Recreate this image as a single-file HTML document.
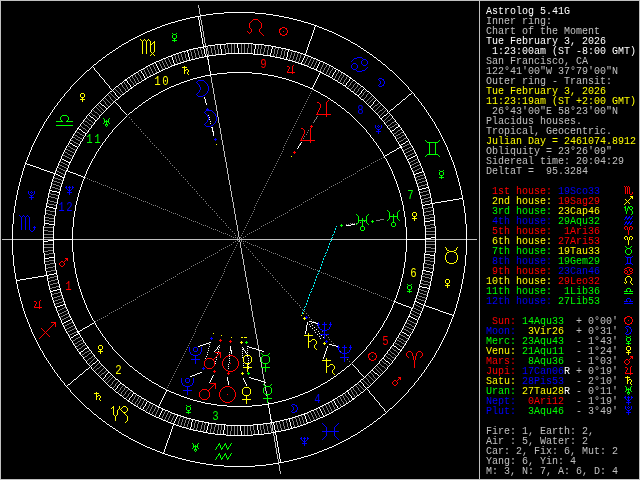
<!DOCTYPE html>
<html><head><meta charset="utf-8"><title>Astrolog 5.41G</title>
<style>
html,body{margin:0;padding:0;background:#000;overflow:hidden}
svg{display:block;will-change:transform}
text{font-family:"Liberation Mono",monospace;font-size:10px;white-space:pre}
text.h{font-size:13.33px;letter-spacing:2px}
.c line,.c circle,.c path{shape-rendering:crispEdges;stroke-width:1;stroke-linecap:square}
.p path{shape-rendering:crispEdges;stroke-width:1;fill:none}
</style></head><body>
<svg width="640" height="480" viewBox="0 0 640 480">
<rect width="640" height="480" fill="#000"/>
<g class="c">
<path d="M0.5 480V0.5H640M639.5 0V479.5H0M479.5 0V480" stroke="#c0c0c0" fill="none" stroke-linecap="butt"/>
</g>
<g class="p" transform="translate(0,0.5)">
<path stroke="#c0c0c0" d="M198 5h1M198 6h1M198 7h1M199 8h1M199 9h1M199 10h1M199 11h1M199 12h1M199 13h1M200 14h1M200 16h1M200 17h1M200 18h1M200 19h1M201 20h1M201 21h1M201 22h1M201 23h1M201 24h1M202 25h1M202 26h1M202 27h1M202 28h1M202 29h1M202 30h1M203 31h1M203 32h1M203 33h1M203 34h1M203 35h1M203 36h1M204 37h1M204 38h1M204 39h1M204 40h1M204 41h1M204 42h1M205 43h1M205 44h1M205 45h1M205 47h1M206 48h1M206 49h1M206 50h1M206 51h1M206 52h1M206 53h1M207 54h1M207 59h1M210 76h1M211 77h1M211 78h1M211 79h1M211 80h1M211 81h1M211 82h1M212 83h1M212 84h1M212 85h1M212 86h1M212 87h1M213 88h1M213 89h1M213 90h1M213 91h1M213 92h1M213 93h1M214 94h1M214 95h1M214 96h1M214 97h1M214 98h1M214 99h1M215 100h1M215 101h1M215 102h1M215 103h1M215 104h1M216 105h1M216 106h1M216 107h1M216 108h1M216 109h1M216 110h1M217 111h1M217 112h1M217 113h1M217 114h1M217 115h1M217 116h1M218 117h1M218 118h1M218 119h1M218 120h1M218 121h1M218 122h1M219 123h1M219 124h1M219 125h1M219 126h1M219 127h1M220 128h1M220 129h1M220 130h1M220 131h1M220 132h1M220 133h1M221 134h1M221 135h1M221 136h1M221 137h1M221 138h1M221 139h1M222 140h1M222 141h1M222 142h1M222 143h1M222 144h1M223 145h1M223 146h1M223 147h1M223 148h1M223 149h1M223 150h1M224 151h1M224 152h1M224 153h1M224 154h1M224 155h1M224 156h1M225 157h1M225 158h1M225 159h1M225 160h1M225 161h1M226 162h1M226 163h1M226 164h1M226 165h1M226 166h1M226 167h1M227 168h1M227 169h1M227 170h1M227 171h1M227 172h1M227 173h1M228 174h1M228 175h1M228 176h1M228 177h1M228 178h1M228 179h1M229 180h1M229 181h1M229 182h1M229 183h1M229 184h1M230 185h1M230 186h1M230 187h1M230 188h1M230 189h1M230 190h1M231 191h1M231 192h1M231 193h1M231 194h1M231 195h1M231 196h1M232 197h1M232 198h1M232 199h1M232 200h1M232 201h1M233 202h1M233 203h1M233 204h1M233 205h1M233 206h1M233 207h1M234 208h1M234 209h1M234 210h1M234 211h1M234 212h1M234 213h1M235 214h1M235 215h1M235 216h1M235 217h1M235 218h1M235 219h1M236 220h1M236 221h1M236 222h1M236 223h1M236 224h1M237 225h1M237 226h1M237 227h1M237 228h1M237 229h1M237 230h1M238 231h1M238 232h1M238 233h1M238 234h1M238 235h1M238 236h1M239 237h1M239 238h1M2 239h10M13 239h30M44 239h9M73 239h166M240 239h166M426 239h9M436 239h30M467 239h10M239 240h1M239 241h1M240 242h1M240 243h1M240 244h1M240 245h1M240 246h1M240 247h1M241 248h1M241 249h1M241 250h1M241 251h1M241 252h1M241 253h1M242 254h1M242 255h1M242 256h1M242 257h1M242 258h1M243 259h1M243 260h1M243 261h1M243 262h1M243 263h1M243 264h1M244 265h1M244 266h1M244 267h1M244 268h1M244 269h1M244 270h1M245 271h1M245 272h1M245 273h1M245 274h1M245 275h1M245 276h1M246 277h1M246 278h1M246 279h1M246 280h1M246 281h1M247 282h1M247 283h1M247 284h1M247 285h1M247 286h1M247 287h1M248 288h1M248 289h1M248 290h1M248 291h1M248 292h1M248 293h1M249 294h1M249 295h1M249 296h1M249 297h1M249 298h1M250 299h1M250 300h1M250 301h1M250 302h1M250 303h1M250 304h1M251 305h1M251 306h1M251 307h1M251 308h1M251 309h1M251 310h1M252 311h1M252 312h1M252 313h1M252 314h1M252 315h1M252 316h1M253 317h1M253 318h1M253 319h1M253 320h1M253 321h1M254 322h1M254 323h1M254 324h1M254 325h1M254 326h1M254 327h1M255 328h1M255 329h1M255 330h1M255 331h1M255 332h1M255 333h1M256 334h1M256 335h1M256 336h1M256 337h1M256 338h1M257 339h1M257 340h1M257 341h1M257 342h1M257 343h1M257 344h1M258 345h1M258 346h1M258 347h1M258 348h1M258 350h1M259 351h1M259 352h1M259 353h1M259 354h1M259 355h1M259 356h1M260 357h1M260 358h1M260 359h1M260 360h1M260 361h1M261 362h1M261 363h1M261 364h1M261 365h1M261 366h1M262 368h1M262 369h1M262 370h1M262 371h1M262 372h1M262 373h1M263 374h1M263 375h1M263 376h1M263 377h1M263 378h1M264 379h1M264 380h1M264 381h1M264 383h1M264 384h1M265 385h1M265 387h1M265 388h1M265 389h1M265 390h1M266 391h1M266 392h1M266 393h1M266 395h1M268 402h1M271 419h1M271 424h1M272 425h1M272 426h1M272 427h1M272 428h1M272 429h1M272 430h1M273 431h1M273 433h1M273 434h1M273 435h1M274 436h1M274 437h1M274 438h1M274 439h1M274 440h1M274 441h1M275 442h1M275 443h1M275 444h1M275 445h1M275 446h1M275 447h1M276 448h1M276 449h1M276 450h1M276 451h1M276 452h1M276 453h1M277 454h1M277 455h1M277 456h1M277 457h1M277 458h1M278 459h1M278 460h1M278 461h1M278 462h1M278 464h1M279 465h1M279 466h1M279 467h1M279 468h1M279 469h1M279 470h1M280 471h1M280 472h1M280 473h1"/>
<path stroke="#ffffff" d="M224 12h31M213 13h11M255 13h11M206 14h7M266 14h7M200 15h6M273 15h6M195 16h5M279 16h5M190 17h5M198 17h1M284 17h5M186 18h4M198 18h1M289 18h4M182 19h4M198 19h1M293 19h4M178 20h4M199 20h1M297 20h4M175 21h3M199 21h1M301 21h3M171 22h4M199 22h1M304 22h4M168 23h3M199 23h1M308 23h3M165 24h3M199 24h1M311 24h3M162 25h3M199 25h1M314 25h3M160 26h2M200 26h1M315 26h1M317 26h2M157 27h3M200 27h1M314 27h1M319 27h3M155 28h2M200 28h1M314 28h1M322 28h2M152 29h3M200 29h1M314 29h1M324 29h3M150 30h2M200 30h1M313 30h1M327 30h2M147 31h3M200 31h1M313 31h1M329 31h3M145 32h2M201 32h1M313 32h1M332 32h2M143 33h2M201 33h1M312 33h1M334 33h2M141 34h2M201 34h1M312 34h1M336 34h2M139 35h2M201 35h1M312 35h1M338 35h2M137 36h2M201 36h1M311 36h1M340 36h2M135 37h2M201 37h1M311 37h1M342 37h2M133 38h2M202 38h1M311 38h1M344 38h2M131 39h2M202 39h1M310 39h1M346 39h2M129 40h2M202 40h1M310 40h1M348 40h2M128 41h1M202 41h1M309 41h1M350 41h1M126 42h2M202 42h1M309 42h1M351 42h2M124 43h2M202 43h1M226 43h27M309 43h1M353 43h2M122 44h2M203 44h1M215 44h11M237 44h1M253 44h11M308 44h1M355 44h2M121 45h1M203 45h1M208 45h7M220 45h1M237 45h1M255 45h1M264 45h7M308 45h1M357 45h1M119 46h2M203 46h5M220 46h1M237 46h1M255 46h1M271 46h5M308 46h1M358 46h2M118 47h1M198 47h6M220 47h1M237 47h1M255 47h1M272 47h1M276 47h5M307 47h1M360 47h1M116 48h2M193 48h5M203 48h1M220 48h1M238 48h1M255 48h1M272 48h1M281 48h5M307 48h1M361 48h2M115 49h1M189 49h4M204 49h1M221 49h1M238 49h1M254 49h1M271 49h1M286 49h4M307 49h1M363 49h1M113 50h2M186 50h3M204 50h1M221 50h1M238 50h1M254 50h1M271 50h1M288 50h1M290 50h3M306 50h1M364 50h2M112 51h1M182 51h4M187 51h1M204 51h1M221 51h1M238 51h1M254 51h1M271 51h1M288 51h1M293 51h4M306 51h1M366 51h1M110 52h2M179 52h3M187 52h1M204 52h1M221 52h1M238 52h1M254 52h1M271 52h1M287 52h1M297 52h3M306 52h1M367 52h2M109 53h1M176 53h3M188 53h1M204 53h1M221 53h1M226 53h27M254 53h1M270 53h1M287 53h1M300 53h3M305 53h1M369 53h1M107 54h2M173 54h3M188 54h1M205 54h1M216 54h10M253 54h10M270 54h1M287 54h1M303 54h3M370 54h2M106 55h1M171 55h2M188 55h1M205 55h1M207 55h1M209 55h7M263 55h8M287 55h1M305 55h3M372 55h1M105 56h1M168 56h4M188 56h1M204 56h5M270 56h5M287 56h1M304 56h1M308 56h3M373 56h1M103 57h2M166 57h2M172 57h1M189 57h1M199 57h5M207 57h1M275 57h5M286 57h1M304 57h1M311 57h2M374 57h2M102 58h1M163 58h3M172 58h1M189 58h1M195 58h4M207 58h1M280 58h4M286 58h1M303 58h1M313 58h3M376 58h1M101 59h1M161 59h2M172 59h1M189 59h1M191 59h4M208 59h1M284 59h4M303 59h1M316 59h2M377 59h1M99 60h2M159 60h2M173 60h1M187 60h4M208 60h1M288 60h4M302 60h1M318 60h2M378 60h2M98 61h1M156 61h3M173 61h1M184 61h3M208 61h1M292 61h3M302 61h1M320 61h3M380 61h1M97 62h1M154 62h2M173 62h1M181 62h3M208 62h1M295 62h3M301 62h1M319 62h1M323 62h2M381 62h1M96 63h1M152 63h2M155 63h1M174 63h1M178 63h3M208 63h1M298 63h4M319 63h1M325 63h2M382 63h1M94 64h2M150 64h2M156 64h1M174 64h4M208 64h1M301 64h3M318 64h1M327 64h2M383 64h2M93 65h1M148 65h2M156 65h1M172 65h3M209 65h1M304 65h3M318 65h1M329 65h2M385 65h1M92 66h1M146 66h2M157 66h1M170 66h2M209 66h1M307 66h2M317 66h1M331 66h2M386 66h1M91 67h1M93 67h1M145 67h1M157 67h1M168 67h2M209 67h1M309 67h2M317 67h1M333 67h1M387 67h1M90 68h1M94 68h1M143 68h2M158 68h1M165 68h3M209 68h1M311 68h3M316 68h1M334 68h2M388 68h1M89 69h1M94 69h1M141 69h2M158 69h1M163 69h2M209 69h1M314 69h3M336 69h2M389 69h1M87 70h2M95 70h1M139 70h2M159 70h1M161 70h2M209 70h1M316 70h2M335 70h1M338 70h2M390 70h2M86 71h1M96 71h1M138 71h1M141 71h1M159 71h2M210 71h1M318 71h3M335 71h1M340 71h1M392 71h1M85 72h1M97 72h1M136 72h2M141 72h1M157 72h2M210 72h1M227 72h25M320 72h2M334 72h1M341 72h2M393 72h1M84 73h1M98 73h1M134 73h2M142 73h1M155 73h2M210 73h1M217 73h10M252 73h10M319 73h1M322 73h2M333 73h1M343 73h2M394 73h1M83 74h1M99 74h1M133 74h1M143 74h1M153 74h2M210 74h7M262 74h6M319 74h1M324 74h2M333 74h1M345 74h1M395 74h1M82 75h1M99 75h1M131 75h2M143 75h1M151 75h2M205 75h6M268 75h6M318 75h1M326 75h2M332 75h1M346 75h2M396 75h1M81 76h1M100 76h1M130 76h1M144 76h1M149 76h2M201 76h4M274 76h4M318 76h1M328 76h2M332 76h1M348 76h1M397 76h1M80 77h1M101 77h1M128 77h2M144 77h1M147 77h2M197 77h4M278 77h4M317 77h1M330 77h2M349 77h2M398 77h1M79 78h1M102 78h1M127 78h1M145 78h2M193 78h4M282 78h4M317 78h1M332 78h1M350 78h2M399 78h1M78 79h1M103 79h1M125 79h2M144 79h2M190 79h3M286 79h3M316 79h1M333 79h2M349 79h1M352 79h1M400 79h1M77 80h1M104 80h1M124 80h3M142 80h2M187 80h3M289 80h3M316 80h1M335 80h2M349 80h1M353 80h2M401 80h1M76 81h1M104 81h1M123 81h1M127 81h1M141 81h1M184 81h3M292 81h3M315 81h1M337 81h1M348 81h1M355 81h1M402 81h1M75 82h1M105 82h1M122 82h1M127 82h1M139 82h2M181 82h3M295 82h3M315 82h1M338 82h2M347 82h1M356 82h1M403 82h1M74 83h1M106 83h1M120 83h2M128 83h1M137 83h2M179 83h2M298 83h2M314 83h1M340 83h2M346 83h1M357 83h2M404 83h1M73 84h1M107 84h1M119 84h1M129 84h1M136 84h1M176 84h3M300 84h3M314 84h1M342 84h1M346 84h1M359 84h1M405 84h1M72 85h1M108 85h1M118 85h1M130 85h1M134 85h2M174 85h2M303 85h2M313 85h1M343 85h3M360 85h1M406 85h1M71 86h1M109 86h1M116 86h2M130 86h1M133 86h1M171 86h3M305 86h3M313 86h1M345 86h1M361 86h2M407 86h1M70 87h1M109 87h1M115 87h1M131 87h2M169 87h2M308 87h2M312 87h1M346 87h1M363 87h1M408 87h1M70 88h1M110 88h1M114 88h1M130 88h2M167 88h2M310 88h3M347 88h2M364 88h1M408 88h1M69 89h1M111 89h1M113 89h1M129 89h1M165 89h2M313 89h1M349 89h1M363 89h1M365 89h1M409 89h1M68 90h1M112 90h1M128 90h1M163 90h2M314 90h2M350 90h1M362 90h1M366 90h1M410 90h1M67 91h1M110 91h2M113 91h1M126 91h2M161 91h2M316 91h2M351 91h2M361 91h1M367 91h2M411 91h1M66 92h1M109 92h1M114 92h1M125 92h1M159 92h2M318 92h2M353 92h1M361 92h1M369 92h1M412 92h1M65 93h1M108 93h1M115 93h1M124 93h1M158 93h1M320 93h1M354 93h1M360 93h1M370 93h1M411 93h1M413 93h1M64 94h1M107 94h1M115 94h1M122 94h2M156 94h2M321 94h2M355 94h2M359 94h1M371 94h1M409 94h2M414 94h1M64 95h1M106 95h1M116 95h1M121 95h1M154 95h2M323 95h2M357 95h2M372 95h1M408 95h1M414 95h1M63 96h1M105 96h1M117 96h1M120 96h1M152 96h2M325 96h2M358 96h1M373 96h1M407 96h1M415 96h1M62 97h1M104 97h1M118 97h2M151 97h1M204 97h1M327 97h1M359 97h1M374 97h1M406 97h1M416 97h1M61 98h1M103 98h1M118 98h1M149 98h2M204 98h1M328 98h2M360 98h1M375 98h1M405 98h1M417 98h1M60 99h1M102 99h1M116 99h2M148 99h1M205 99h1M330 99h1M361 99h2M376 99h1M403 99h2M418 99h1M60 100h1M101 100h1M115 100h1M146 100h2M205 100h1M331 100h2M363 100h1M375 100h1M377 100h1M402 100h1M418 100h1M59 101h1M100 101h1M114 101h1M145 101h1M205 101h1M333 101h1M364 101h1M374 101h1M378 101h1M401 101h1M419 101h1M58 102h1M99 102h1M113 102h1M115 102h1M143 102h2M205 102h1M334 102h2M365 102h1M373 102h1M379 102h1M400 102h1M420 102h1M57 103h1M98 103h1M100 103h1M112 103h1M116 103h1M142 103h1M206 103h1M336 103h1M366 103h1M373 103h1M380 103h1M399 103h1M421 103h1M57 104h1M97 104h1M101 104h1M111 104h1M117 104h1M141 104h1M206 104h1M337 104h1M367 104h1M372 104h1M381 104h1M397 104h2M421 104h1M56 105h1M96 105h1M102 105h2M110 105h1M118 105h1M139 105h2M338 105h2M368 105h1M371 105h1M382 105h1M396 105h1M422 105h1M55 106h1M95 106h1M104 106h1M109 106h1M119 106h1M138 106h1M340 106h1M369 106h2M383 106h1M395 106h1M423 106h1M54 107h1M94 107h1M105 107h1M108 107h1M120 107h1M137 107h1M341 107h1M370 107h1M384 107h1M394 107h1M424 107h1M54 108h1M93 108h1M106 108h2M120 108h1M135 108h2M342 108h2M371 108h1M385 108h1M393 108h1M424 108h1M53 109h1M92 109h1M106 109h1M121 109h1M134 109h1M344 109h1M372 109h1M386 109h1M391 109h2M425 109h1M52 110h1M91 110h1M105 110h1M122 110h1M133 110h1M345 110h1M373 110h1M387 110h1M390 110h1M426 110h1M52 111h1M91 111h1M104 111h1M123 111h1M132 111h1M346 111h1M374 111h1M387 111h1M389 111h1M426 111h1M51 112h1M90 112h1M103 112h1M124 112h1M130 112h2M347 112h2M375 112h1M388 112h1M427 112h1M50 113h1M89 113h1M102 113h1M125 113h1M129 113h1M349 113h1M376 113h1M387 113h1M389 113h1M428 113h1M50 114h1M88 114h1M101 114h1M126 114h1M128 114h1M350 114h1M377 114h1M386 114h1M390 114h1M428 114h1M49 115h1M87 115h1M89 115h1M100 115h1M208 115h1M351 115h1M378 115h1M384 115h2M391 115h1M429 115h1M48 116h1M86 116h1M90 116h1M99 116h1M126 116h1M352 116h1M379 116h1M383 116h1M392 116h1M430 116h1M48 117h1M86 117h1M91 117h2M99 117h1M125 117h1M209 117h1M353 117h1M379 117h1M382 117h1M392 117h1M430 117h1M47 118h1M85 118h1M93 118h1M98 118h1M124 118h1M354 118h1M380 118h2M393 118h1M431 118h1M46 119h1M84 119h1M94 119h1M97 119h1M123 119h1M209 119h1M355 119h1M381 119h1M394 119h1M432 119h1M46 120h1M83 120h1M95 120h2M122 120h1M356 120h1M382 120h1M395 120h1M432 120h1M45 121h1M83 121h1M95 121h1M121 121h1M210 121h1M357 121h1M383 121h1M395 121h1M433 121h1M44 122h1M82 122h1M94 122h1M120 122h1M358 122h1M384 122h1M396 122h1M434 122h1M44 123h1M81 123h1M94 123h1M119 123h1M210 123h1M359 123h1M384 123h1M397 123h1M434 123h1M43 124h1M80 124h1M93 124h1M118 124h1M360 124h1M385 124h1M398 124h1M435 124h1M43 125h1M80 125h1M92 125h1M117 125h1M361 125h1M386 125h1M398 125h2M435 125h1M42 126h1M79 126h1M91 126h1M116 126h1M362 126h1M387 126h1M398 126h2M436 126h1M42 127h1M78 127h1M91 127h1M115 127h1M211 127h2M363 127h1M387 127h1M396 127h2M400 127h1M436 127h1M41 128h1M77 128h2M90 128h1M114 128h1M212 128h1M364 128h1M388 128h1M395 128h1M401 128h1M437 128h1M40 129h1M77 129h1M79 129h2M89 129h1M113 129h1M212 129h1M365 129h1M389 129h1M394 129h1M401 129h1M438 129h1M40 130h1M76 130h1M81 130h1M88 130h1M112 130h1M212 130h1M366 130h1M390 130h1M392 130h2M402 130h1M438 130h1M39 131h1M75 131h1M82 131h1M88 131h1M112 131h1M212 131h2M366 131h1M390 131h2M403 131h1M439 131h1M39 132h1M75 132h1M83 132h2M87 132h1M111 132h1M213 132h1M367 132h1M391 132h1M403 132h1M439 132h1M38 133h1M74 133h1M85 133h2M110 133h1M213 133h1M368 133h1M392 133h1M404 133h1M440 133h1M38 134h1M73 134h1M85 134h1M109 134h1M213 134h1M369 134h1M393 134h1M405 134h1M440 134h1M37 135h1M73 135h1M85 135h1M108 135h1M213 135h1M370 135h1M393 135h1M405 135h1M441 135h1M37 136h1M72 136h1M84 136h1M108 136h1M370 136h1M394 136h1M406 136h1M441 136h1M36 137h1M72 137h1M83 137h1M107 137h1M371 137h1M395 137h1M406 137h1M442 137h1M36 138h1M71 138h1M83 138h1M106 138h1M372 138h1M395 138h1M407 138h1M442 138h1M35 139h1M70 139h1M82 139h1M105 139h1M373 139h1M396 139h1M408 139h1M443 139h1M35 140h1M70 140h1M82 140h1M105 140h1M373 140h1M396 140h1M408 140h1M443 140h1M34 141h1M69 141h1M81 141h1M104 141h1M374 141h1M397 141h1M406 141h2M409 141h1M444 141h1M34 142h1M69 142h1M80 142h1M103 142h1M301 142h1M375 142h1M398 142h1M405 142h1M409 142h1M444 142h1M33 143h1M68 143h1M70 143h2M80 143h1M102 143h1M300 143h1M376 143h1M398 143h1M403 143h2M410 143h1M445 143h1M33 144h1M68 144h1M72 144h1M79 144h1M102 144h1M300 144h1M376 144h1M399 144h1M401 144h2M410 144h1M445 144h1M32 145h1M67 145h1M73 145h2M79 145h1M101 145h1M299 145h1M377 145h1M399 145h2M411 145h1M446 145h1M32 146h1M66 146h1M75 146h2M78 146h1M100 146h1M298 146h1M378 146h1M400 146h2M412 146h1M446 146h1M31 147h1M66 147h1M77 147h1M100 147h1M298 147h1M378 147h1M399 147h3M412 147h1M447 147h1M31 148h1M65 148h1M77 148h1M99 148h1M297 148h1M379 148h1M397 148h2M401 148h1M413 148h1M447 148h1M31 149h1M65 149h1M76 149h1M98 149h1M380 149h1M396 149h1M402 149h1M413 149h1M447 149h1M30 150h1M64 150h1M76 150h1M98 150h1M380 150h1M394 150h2M402 150h1M414 150h1M448 150h1M30 151h1M64 151h1M75 151h1M97 151h1M381 151h1M392 151h2M403 151h1M414 151h1M448 151h1M29 152h1M63 152h1M75 152h1M96 152h1M382 152h1M390 152h2M403 152h1M415 152h1M449 152h1M29 153h1M63 153h1M74 153h1M96 153h1M382 153h1M389 153h1M404 153h1M415 153h1M449 153h1M29 154h1M62 154h1M74 154h1M95 154h1M383 154h1M387 154h2M404 154h1M416 154h1M449 154h1M28 155h1M62 155h1M73 155h1M95 155h1M383 155h1M385 155h2M405 155h1M415 155h2M450 155h1M28 156h1M61 156h1M73 156h1M94 156h1M384 156h1M405 156h1M413 156h2M417 156h1M450 156h1M27 157h1M61 157h1M72 157h1M94 157h1M384 157h1M406 157h1M411 157h2M417 157h1M451 157h1M27 158h1M61 158h1M72 158h1M93 158h1M385 158h1M406 158h1M409 158h2M417 158h1M451 158h1M27 159h1M60 159h1M62 159h2M71 159h1M92 159h1M386 159h1M407 159h2M418 159h1M451 159h1M26 160h1M60 160h1M64 160h2M71 160h1M92 160h1M386 160h1M407 160h1M418 160h1M452 160h1M26 161h1M59 161h1M66 161h2M70 161h1M91 161h1M387 161h1M408 161h1M419 161h1M452 161h1M25 162h1M59 162h1M68 162h3M91 162h1M387 162h1M408 162h1M419 162h1M453 162h1M25 163h2M58 163h1M69 163h1M90 163h1M388 163h1M409 163h1M420 163h1M453 163h1M25 164h1M27 164h3M58 164h1M69 164h1M90 164h1M388 164h1M409 164h1M420 164h1M453 164h1M24 165h1M30 165h3M58 165h1M68 165h1M89 165h1M389 165h1M410 165h1M420 165h1M454 165h1M24 166h1M33 166h3M57 166h1M68 166h1M89 166h1M389 166h1M410 166h1M421 166h1M454 166h1M24 167h1M36 167h3M57 167h1M68 167h1M88 167h1M390 167h1M410 167h1M421 167h1M454 167h1M23 168h1M39 168h2M56 168h1M67 168h1M88 168h1M390 168h1M411 168h1M422 168h1M455 168h1M23 169h1M41 169h3M56 169h1M67 169h1M87 169h1M391 169h1M411 169h1M422 169h1M455 169h1M23 170h1M44 170h3M56 170h1M66 170h2M87 170h1M391 170h1M412 170h1M422 170h1M455 170h1M22 171h1M47 171h3M55 171h1M66 171h1M68 171h2M86 171h1M392 171h1M412 171h1M422 171h2M456 171h1M22 172h1M50 172h3M55 172h1M65 172h1M70 172h3M86 172h1M392 172h1M413 172h1M419 172h3M423 172h1M456 172h1M22 173h1M53 173h3M65 173h1M73 173h3M86 173h1M392 173h1M413 173h1M416 173h3M424 173h1M456 173h1M22 174h1M54 174h1M56 174h2M65 174h1M76 174h2M85 174h1M393 174h1M413 174h3M424 174h1M456 174h1M21 175h1M54 175h1M58 175h2M64 175h1M78 175h3M85 175h1M393 175h1M414 175h1M424 175h1M457 175h1M21 176h1M53 176h1M60 176h2M64 176h1M81 176h2M84 176h1M394 176h1M414 176h1M425 176h1M457 176h1M21 177h1M53 177h1M62 177h3M83 177h2M394 177h1M414 177h1M425 177h1M457 177h1M20 178h1M53 178h1M63 178h1M84 178h1M394 178h1M415 178h1M425 178h1M458 178h1M20 179h1M52 179h1M63 179h1M83 179h1M395 179h1M415 179h1M426 179h1M458 179h1M20 180h1M52 180h1M63 180h1M83 180h1M395 180h1M415 180h1M426 180h1M458 180h1M20 181h1M52 181h1M62 181h1M82 181h1M396 181h1M416 181h1M426 181h1M458 181h1M19 182h1M51 182h1M62 182h1M82 182h1M396 182h1M416 182h1M427 182h1M459 182h1M19 183h1M51 183h1M62 183h1M82 183h1M396 183h1M416 183h1M427 183h1M459 183h1M19 184h1M51 184h1M61 184h1M81 184h1M397 184h1M417 184h1M427 184h1M459 184h1M19 185h1M51 185h1M61 185h1M81 185h1M397 185h1M417 185h1M427 185h1M459 185h1M18 186h1M50 186h1M61 186h1M81 186h1M397 186h1M417 186h1M428 186h1M460 186h1M18 187h1M50 187h1M60 187h1M80 187h1M398 187h1M418 187h1M426 187h3M460 187h1M18 188h1M50 188h1M60 188h1M80 188h1M398 188h1M418 188h1M422 188h4M428 188h1M460 188h1M18 189h1M49 189h1M60 189h1M80 189h1M398 189h1M418 189h4M429 189h1M460 189h1M17 190h1M49 190h3M60 190h1M79 190h1M399 190h1M418 190h1M429 190h1M461 190h1M17 191h1M49 191h1M52 191h5M59 191h1M79 191h1M399 191h1M419 191h1M429 191h1M461 191h1M17 192h1M49 192h1M57 192h3M79 192h1M399 192h1M419 192h1M429 192h1M461 192h1M17 193h1M48 193h1M59 193h1M78 193h1M400 193h1M419 193h1M430 193h1M461 193h1M17 194h1M48 194h1M59 194h1M78 194h1M400 194h1M419 194h1M430 194h1M461 194h1M16 195h1M48 195h1M58 195h1M78 195h1M400 195h1M420 195h1M430 195h1M462 195h1M16 196h1M48 196h1M58 196h1M78 196h1M400 196h1M420 196h1M430 196h1M462 196h1M16 197h1M48 197h1M58 197h1M77 197h1M401 197h1M420 197h1M430 197h1M462 197h1M16 198h1M47 198h1M58 198h1M77 198h1M401 198h1M420 198h1M431 198h1M459 198h4M16 199h1M47 199h1M57 199h1M77 199h1M401 199h1M421 199h1M431 199h1M453 199h6M462 199h1M15 200h1M47 200h1M57 200h1M77 200h1M401 200h1M421 200h1M431 200h1M447 200h6M463 200h1M15 201h1M47 201h1M57 201h1M76 201h1M402 201h1M421 201h1M431 201h1M441 201h6M463 201h1M15 202h1M47 202h1M57 202h1M76 202h1M402 202h1M421 202h1M431 202h1M435 202h6M463 202h1M15 203h1M46 203h1M57 203h1M76 203h1M402 203h1M421 203h1M430 203h5M463 203h1M15 204h1M46 204h1M56 204h1M76 204h1M402 204h1M422 204h1M425 204h5M432 204h1M463 204h1M15 205h1M46 205h1M56 205h1M75 205h1M403 205h1M422 205h3M432 205h1M463 205h1M14 206h1M46 206h3M56 206h1M75 206h1M403 206h1M422 206h1M432 206h1M464 206h1M14 207h1M46 207h1M49 207h4M56 207h1M75 207h1M403 207h1M422 207h1M432 207h1M464 207h1M14 208h1M45 208h1M53 208h4M75 208h1M403 208h1M422 208h1M433 208h1M464 208h1M14 209h1M45 209h1M55 209h1M75 209h1M403 209h1M423 209h1M433 209h1M464 209h1M14 210h1M45 210h1M55 210h1M75 210h1M403 210h1M423 210h1M433 210h1M464 210h1M14 211h1M45 211h1M55 211h1M74 211h1M404 211h1M423 211h1M433 211h1M464 211h1M14 212h1M45 212h1M55 212h1M74 212h1M404 212h1M423 212h1M433 212h1M464 212h1M13 213h1M45 213h1M55 213h1M74 213h1M404 213h1M423 213h1M433 213h1M465 213h1M13 214h1M45 214h1M55 214h1M74 214h1M404 214h1M423 214h1M433 214h1M465 214h1M13 215h1M44 215h1M55 215h1M74 215h1M404 215h1M423 215h1M434 215h1M465 215h1M13 216h1M44 216h1M54 216h1M74 216h1M404 216h1M424 216h1M434 216h1M465 216h1M13 217h1M44 217h1M54 217h1M73 217h1M405 217h1M424 217h1M434 217h1M465 217h1M13 218h1M44 218h1M54 218h1M73 218h1M405 218h1M424 218h1M434 218h1M465 218h1M13 219h1M44 219h1M54 219h1M73 219h1M405 219h1M424 219h1M434 219h1M465 219h1M13 220h1M44 220h1M54 220h1M73 220h1M405 220h1M424 220h1M430 220h5M465 220h1M13 221h1M44 221h1M54 221h1M73 221h1M405 221h1M424 221h6M434 221h1M465 221h1M13 222h1M44 222h1M54 222h1M73 222h1M405 222h1M424 222h1M434 222h1M465 222h1M13 223h1M44 223h5M54 223h1M73 223h1M405 223h1M424 223h1M434 223h1M465 223h1M12 224h1M44 224h1M49 224h6M73 224h1M351 224h4M405 224h1M424 224h1M434 224h1M466 224h1M12 225h1M44 225h1M54 225h1M73 225h1M346 225h5M405 225h1M424 225h1M434 225h1M466 225h1M12 226h1M43 226h1M53 226h1M73 226h1M405 226h1M425 226h1M435 226h1M466 226h1M12 227h1M43 227h1M53 227h1M72 227h1M406 227h1M425 227h1M435 227h1M466 227h1M12 228h1M43 228h1M53 228h1M72 228h1M406 228h1M425 228h1M435 228h1M466 228h1M12 229h1M43 229h1M53 229h1M72 229h1M406 229h1M425 229h1M435 229h1M466 229h1M12 230h1M43 230h1M53 230h1M72 230h1M406 230h1M425 230h1M435 230h1M466 230h1M12 231h1M43 231h1M53 231h1M72 231h1M406 231h1M425 231h1M435 231h1M466 231h1M12 232h1M43 232h1M53 232h1M72 232h1M406 232h1M425 232h1M435 232h1M466 232h1M12 233h1M43 233h1M53 233h1M72 233h1M406 233h1M425 233h1M435 233h1M466 233h1M12 234h1M43 234h1M53 234h1M72 234h1M406 234h1M425 234h1M435 234h1M466 234h1M12 235h1M43 235h1M53 235h1M72 235h1M406 235h1M425 235h1M435 235h1M466 235h1M12 236h1M43 236h1M53 236h1M72 236h1M406 236h1M425 236h1M435 236h1M466 236h1M12 237h1M43 237h1M53 237h1M72 237h1M406 237h1M425 237h1M431 237h5M466 237h1M12 238h1M43 238h1M53 238h1M72 238h1M406 238h1M425 238h6M435 238h1M466 238h1M12 239h1M43 239h1M53 239h20M406 239h20M435 239h1M466 239h1M12 240h1M43 240h1M48 240h6M72 240h1M406 240h1M425 240h1M435 240h1M466 240h1M12 241h1M43 241h5M53 241h1M72 241h1M406 241h1M425 241h1M435 241h1M466 241h1M12 242h1M43 242h1M53 242h1M72 242h1M406 242h1M425 242h1M435 242h1M466 242h1M12 243h1M43 243h1M53 243h1M72 243h1M406 243h1M425 243h1M435 243h1M466 243h1M12 244h1M43 244h1M53 244h1M72 244h1M406 244h1M425 244h1M435 244h1M466 244h1M12 245h1M43 245h1M53 245h1M72 245h1M406 245h1M425 245h1M435 245h1M466 245h1M12 246h1M43 246h1M53 246h1M72 246h1M406 246h1M425 246h1M435 246h1M466 246h1M12 247h1M43 247h1M53 247h1M72 247h1M406 247h1M425 247h1M435 247h1M466 247h1M12 248h1M43 248h1M53 248h1M72 248h1M406 248h1M425 248h1M435 248h1M466 248h1M12 249h1M43 249h1M53 249h1M72 249h1M406 249h1M425 249h1M435 249h1M466 249h1M12 250h1M43 250h1M53 250h1M72 250h1M406 250h1M425 250h1M435 250h1M466 250h1M12 251h1M43 251h1M53 251h1M72 251h1M406 251h1M425 251h1M435 251h1M466 251h1M12 252h1M43 252h1M53 252h1M73 252h1M405 252h1M425 252h1M435 252h1M466 252h1M12 253h1M44 253h1M54 253h1M73 253h1M405 253h1M424 253h1M434 253h1M466 253h1M12 254h1M44 254h1M54 254h1M73 254h1M405 254h1M424 254h6M434 254h1M466 254h1M13 255h1M44 255h1M54 255h1M73 255h1M405 255h1M424 255h1M430 255h5M465 255h1M13 256h1M44 256h1M54 256h1M73 256h1M405 256h1M424 256h1M434 256h1M465 256h1M13 257h1M44 257h1M49 257h6M73 257h1M405 257h1M424 257h1M434 257h1M465 257h1M13 258h1M44 258h5M54 258h1M73 258h1M405 258h1M424 258h1M434 258h1M465 258h1M13 259h1M44 259h1M54 259h1M73 259h1M405 259h1M424 259h1M434 259h1M465 259h1M13 260h1M44 260h1M54 260h1M73 260h1M405 260h1M424 260h1M434 260h1M465 260h1M13 261h1M44 261h1M54 261h1M73 261h1M405 261h1M424 261h1M434 261h1M465 261h1M13 262h1M44 262h1M54 262h1M74 262h1M404 262h1M424 262h1M434 262h1M465 262h1M13 263h1M44 263h1M55 263h1M74 263h1M404 263h1M423 263h1M434 263h1M465 263h1M13 264h1M45 264h1M55 264h1M74 264h1M404 264h1M423 264h1M433 264h1M465 264h1M13 265h1M45 265h1M55 265h1M74 265h1M404 265h1M423 265h1M433 265h1M465 265h1M14 266h1M45 266h1M55 266h1M74 266h1M404 266h1M423 266h1M433 266h1M464 266h1M14 267h1M45 267h1M55 267h1M74 267h1M404 267h1M423 267h1M433 267h1M464 267h1M14 268h1M45 268h1M55 268h1M75 268h1M403 268h1M423 268h1M433 268h1M464 268h1M14 269h1M45 269h1M55 269h1M75 269h1M403 269h1M423 269h1M433 269h1M464 269h1M14 270h1M45 270h1M56 270h1M75 270h1M403 270h1M422 270h4M433 270h1M464 270h1M14 271h1M46 271h1M56 271h1M75 271h1M403 271h1M422 271h1M426 271h4M432 271h1M464 271h1M14 272h1M46 272h1M56 272h1M75 272h1M403 272h1M422 272h1M430 272h3M464 272h1M15 273h1M46 273h1M54 273h3M75 273h1M403 273h1M422 273h1M432 273h1M463 273h1M15 274h1M46 274h1M49 274h5M56 274h1M76 274h1M402 274h1M422 274h1M432 274h1M463 274h1M15 275h1M44 275h5M57 275h1M76 275h1M402 275h1M421 275h1M432 275h1M463 275h1M15 276h1M38 276h6M47 276h1M57 276h1M76 276h1M402 276h1M421 276h1M431 276h1M463 276h1M15 277h1M32 277h6M47 277h1M57 277h1M76 277h1M402 277h1M421 277h1M431 277h1M463 277h1M15 278h1M26 278h6M47 278h1M57 278h1M77 278h1M401 278h1M421 278h1M431 278h1M463 278h1M16 279h1M20 279h6M47 279h1M57 279h1M77 279h1M401 279h1M421 279h1M431 279h1M462 279h1M16 280h4M47 280h1M58 280h1M77 280h1M401 280h1M420 280h1M431 280h1M462 280h1M16 281h1M48 281h1M58 281h1M77 281h1M401 281h1M420 281h1M430 281h1M462 281h1M16 282h1M48 282h1M58 282h1M78 282h1M400 282h1M420 282h1M430 282h1M462 282h1M16 283h1M48 283h1M58 283h1M78 283h1M400 283h1M420 283h1M430 283h1M462 283h1M17 284h1M48 284h1M59 284h1M78 284h1M400 284h1M419 284h1M430 284h1M461 284h1M17 285h1M48 285h1M59 285h1M78 285h1M400 285h1M419 285h1M430 285h1M461 285h1M17 286h1M49 286h1M59 286h1M79 286h1M399 286h1M419 286h3M429 286h1M461 286h1M17 287h1M49 287h1M59 287h1M79 287h1M399 287h1M419 287h1M422 287h5M429 287h1M461 287h1M17 288h1M49 288h1M60 288h1M79 288h1M399 288h1M418 288h1M427 288h3M461 288h1M18 289h1M49 289h1M57 289h4M80 289h1M398 289h1M418 289h1M429 289h1M460 289h1M18 290h1M50 290h1M53 290h4M60 290h1M80 290h1M398 290h1M418 290h1M428 290h1M460 290h1M18 291h1M50 291h3M60 291h1M80 291h1M398 291h1M418 291h1M428 291h1M460 291h1M18 292h1M50 292h1M61 292h1M81 292h1M397 292h1M417 292h1M428 292h1M460 292h1M19 293h1M51 293h1M61 293h1M81 293h1M397 293h1M417 293h1M427 293h1M459 293h1M19 294h1M51 294h1M61 294h1M81 294h1M397 294h1M417 294h1M427 294h1M459 294h1M19 295h1M51 295h1M62 295h1M82 295h1M396 295h1M416 295h1M427 295h1M459 295h1M19 296h1M51 296h1M62 296h1M82 296h1M396 296h1M416 296h1M427 296h1M459 296h1M20 297h1M52 297h1M62 297h1M82 297h1M396 297h1M416 297h1M426 297h1M458 297h1M20 298h1M52 298h1M63 298h1M83 298h1M395 298h1M415 298h1M426 298h1M458 298h1M20 299h1M52 299h1M63 299h1M83 299h1M395 299h1M415 299h1M426 299h1M458 299h1M20 300h1M53 300h1M63 300h1M84 300h1M394 300h1M415 300h1M425 300h1M458 300h1M21 301h1M53 301h1M64 301h1M84 301h1M394 301h2M414 301h3M425 301h1M457 301h1M21 302h1M53 302h1M64 302h1M84 302h1M394 302h1M396 302h2M414 302h1M417 302h2M425 302h1M457 302h1M21 303h1M54 303h1M64 303h1M85 303h1M393 303h1M398 303h3M414 303h1M419 303h2M424 303h1M457 303h1M22 304h1M54 304h1M63 304h3M85 304h1M393 304h1M401 304h2M413 304h1M421 304h2M424 304h1M456 304h1M22 305h1M54 305h1M60 305h3M65 305h1M86 305h1M392 305h1M403 305h3M413 305h1M423 305h3M456 305h1M22 306h1M55 306h1M57 306h3M65 306h1M86 306h1M392 306h1M406 306h3M413 306h1M423 306h1M426 306h3M456 306h1M22 307h1M55 307h2M66 307h1M86 307h1M392 307h1M409 307h2M412 307h1M423 307h1M429 307h3M456 307h1M23 308h1M56 308h1M66 308h1M87 308h1M391 308h1M411 308h2M422 308h1M432 308h3M455 308h1M23 309h1M56 309h1M67 309h1M87 309h1M391 309h1M411 309h1M422 309h1M435 309h3M455 309h1M23 310h1M56 310h1M67 310h1M88 310h1M390 310h1M411 310h1M422 310h1M438 310h2M455 310h1M24 311h1M57 311h1M68 311h1M88 311h1M390 311h1M410 311h1M421 311h1M440 311h3M454 311h1M24 312h1M57 312h1M68 312h1M89 312h1M389 312h1M410 312h1M421 312h1M443 312h3M454 312h1M24 313h1M58 313h1M68 313h1M89 313h1M389 313h1M410 313h1M420 313h1M446 313h3M454 313h1M25 314h1M58 314h1M69 314h1M90 314h1M388 314h1M409 314h1M420 314h1M449 314h3M453 314h1M25 315h1M58 315h1M69 315h1M90 315h1M388 315h1M409 315h1M420 315h1M452 315h2M25 316h1M59 316h1M70 316h1M91 316h1M387 316h1M408 316h3M419 316h1M453 316h1M26 317h1M59 317h1M70 317h1M91 317h1M387 317h1M408 317h1M411 317h2M419 317h1M452 317h1M26 318h1M60 318h1M71 318h1M92 318h1M386 318h1M407 318h1M413 318h2M418 318h1M452 318h1M27 319h1M60 319h1M70 319h2M92 319h1M386 319h1M407 319h1M415 319h2M418 319h1M451 319h1M27 320h1M61 320h1M68 320h2M72 320h1M93 320h1M385 320h1M406 320h1M417 320h1M451 320h1M27 321h1M61 321h1M66 321h2M72 321h1M94 321h1M309 321h3M384 321h1M406 321h1M417 321h1M451 321h1M28 322h1M61 322h1M64 322h2M73 322h1M94 322h1M307 322h1M312 322h4M384 322h1M405 322h1M417 322h1M450 322h1M28 323h1M62 323h2M73 323h1M92 323h2M95 323h1M307 323h1M311 323h1M316 323h2M383 323h1M405 323h1M416 323h1M450 323h1M29 324h1M62 324h1M74 324h1M90 324h2M95 324h1M307 324h1M309 324h1M383 324h1M404 324h1M416 324h1M449 324h1M29 325h1M63 325h1M74 325h1M89 325h1M96 325h1M306 325h1M312 325h1M382 325h1M404 325h1M415 325h1M449 325h1M29 326h1M63 326h1M75 326h1M87 326h2M96 326h1M306 326h1M310 326h1M382 326h1M403 326h1M415 326h1M449 326h1M30 327h1M64 327h1M75 327h1M85 327h2M97 327h1M306 327h1M314 327h1M381 327h1M403 327h1M414 327h1M448 327h1M30 328h1M64 328h1M76 328h1M83 328h2M98 328h1M306 328h1M312 328h1M380 328h1M402 328h1M414 328h1M448 328h1M31 329h1M65 329h1M76 329h1M82 329h1M98 329h1M306 329h1M316 329h1M380 329h1M402 329h1M413 329h1M447 329h1M31 330h1M65 330h1M77 330h1M80 330h2M99 330h1M306 330h1M314 330h1M379 330h1M401 330h1M413 330h1M447 330h1M31 331h1M66 331h1M77 331h3M100 331h1M305 331h1M318 331h1M378 331h1M401 331h1M412 331h1M447 331h1M32 332h1M66 332h1M77 332h2M100 332h1M305 332h1M315 332h1M378 332h1M400 332h1M402 332h2M412 332h1M446 332h1M32 333h1M67 333h1M78 333h2M101 333h1M305 333h1M319 333h1M377 333h1M399 333h1M404 333h2M411 333h1M446 333h1M33 334h1M68 334h1M76 334h2M79 334h1M102 334h1M317 334h1M376 334h1M399 334h1M406 334h1M410 334h1M445 334h1M33 335h1M68 335h1M74 335h2M80 335h1M102 335h1M321 335h1M376 335h1M398 335h1M407 335h2M410 335h1M445 335h1M34 336h1M69 336h1M73 336h1M80 336h1M103 336h1M319 336h1M375 336h1M398 336h1M409 336h1M444 336h1M34 337h1M69 337h1M71 337h2M81 337h1M104 337h1M323 337h1M374 337h1M397 337h1M409 337h1M444 337h1M35 338h1M70 338h1M82 338h1M105 338h1M320 338h1M373 338h1M396 338h1M408 338h1M443 338h1M35 339h1M70 339h1M82 339h1M105 339h1M373 339h1M396 339h1M408 339h1M443 339h1M36 340h1M71 340h1M83 340h1M106 340h1M372 340h1M395 340h1M407 340h1M442 340h1M36 341h1M72 341h1M83 341h1M107 341h1M371 341h1M395 341h1M406 341h1M442 341h1M37 342h1M72 342h1M84 342h1M108 342h1M209 342h2M370 342h1M394 342h1M406 342h1M441 342h1M37 343h1M73 343h1M85 343h1M108 343h1M206 343h3M370 343h1M393 343h1M405 343h1M441 343h1M38 344h1M73 344h1M85 344h1M109 344h1M203 344h3M209 344h1M329 344h3M369 344h1M393 344h1M405 344h1M440 344h1M38 345h1M74 345h1M86 345h1M110 345h1M200 345h3M219 345h1M332 345h4M368 345h1M392 345h2M404 345h1M440 345h1M39 346h1M75 346h1M87 346h1M111 346h1M198 346h2M209 346h1M218 346h1M230 346h1M247 346h2M327 346h1M336 346h2M367 346h1M391 346h1M394 346h2M403 346h1M439 346h1M39 347h1M75 347h1M87 347h2M112 347h1M217 347h1M219 347h1M230 347h1M242 347h1M249 347h3M327 347h1M366 347h1M390 347h1M396 347h1M403 347h1M439 347h1M40 348h1M76 348h1M85 348h2M88 348h1M112 348h1M208 348h1M217 348h1M230 348h1M243 348h1M247 348h1M252 348h4M326 348h1M366 348h1M390 348h1M397 348h1M402 348h1M438 348h1M40 349h1M77 349h1M84 349h1M89 349h1M113 349h1M216 349h1M218 349h1M230 349h1M242 349h2M256 349h3M326 349h1M365 349h1M389 349h1M398 349h2M401 349h1M438 349h1M41 350h1M77 350h1M83 350h1M90 350h1M114 350h1M208 350h1M215 350h1M230 350h2M244 350h1M247 350h1M259 350h3M326 350h1M364 350h1M388 350h1M400 350h2M437 350h1M42 351h1M78 351h1M81 351h2M91 351h1M115 351h1M214 351h1M218 351h1M231 351h1M242 351h1M245 351h1M262 351h2M325 351h1M363 351h1M387 351h1M400 351h1M436 351h1M42 352h1M79 352h2M91 352h1M116 352h1M207 352h1M229 352h1M231 352h1M245 352h1M247 352h1M325 352h1M362 352h1M387 352h1M399 352h1M436 352h1M43 353h1M79 353h2M92 353h1M117 353h1M217 353h1M231 353h1M242 353h1M246 353h1M325 353h1M361 353h1M386 353h1M398 353h1M435 353h1M43 354h1M80 354h1M93 354h1M118 354h1M207 354h1M229 354h1M247 354h1M324 354h1M360 354h1M385 354h1M398 354h1M435 354h1M44 355h1M81 355h1M94 355h1M119 355h1M242 355h1M324 355h1M359 355h1M384 355h1M397 355h1M434 355h1M44 356h1M82 356h1M94 356h1M120 356h1M206 356h1M229 356h1M247 356h1M324 356h1M358 356h1M384 356h1M396 356h1M434 356h1M45 357h1M83 357h1M95 357h1M121 357h1M216 357h1M242 357h1M323 357h1M357 357h1M383 357h1M395 357h1M433 357h1M46 358h1M83 358h1M96 358h1M122 358h1M205 358h1M229 358h1M248 358h1M323 358h1M356 358h1M382 358h2M395 358h1M432 358h1M46 359h1M84 359h1M97 359h1M123 359h1M216 359h1M355 359h1M381 359h1M384 359h1M394 359h1M432 359h1M47 360h1M85 360h1M97 360h2M124 360h1M229 360h1M248 360h1M354 360h1M380 360h1M385 360h1M393 360h1M431 360h1M48 361h1M86 361h1M96 361h1M99 361h1M125 361h1M215 361h1M353 361h1M379 361h1M386 361h2M392 361h1M430 361h1M48 362h1M86 362h1M95 362h1M99 362h1M126 362h1M229 362h1M248 362h1M352 362h1M379 362h1M388 362h1M392 362h1M430 362h1M49 363h1M87 363h1M93 363h2M100 363h1M127 363h1M215 363h1M243 363h1M378 363h1M389 363h1M391 363h1M429 363h1M50 364h1M88 364h1M92 364h1M101 364h1M128 364h1M228 364h1M248 364h1M350 364h1M352 364h1M377 364h1M390 364h1M428 364h1M50 365h1M89 365h1M91 365h1M102 365h1M129 365h1M243 365h1M349 365h1M353 365h1M376 365h1M389 365h1M428 365h1M51 366h1M90 366h1M103 366h1M130 366h2M228 366h1M248 366h1M347 366h2M354 366h1M375 366h1M388 366h1M427 366h1M52 367h1M89 367h1M91 367h1M104 367h1M132 367h1M346 367h1M355 367h1M374 367h1M387 367h1M426 367h1M52 368h1M88 368h1M91 368h1M105 368h1M133 368h1M228 368h1M248 368h1M345 368h1M356 368h1M373 368h1M387 368h1M426 368h1M53 369h1M86 369h2M92 369h1M106 369h1M134 369h1M344 369h1M357 369h1M372 369h1M386 369h1M425 369h1M54 370h1M85 370h1M93 370h1M107 370h1M135 370h2M342 370h2M358 370h1M371 370h2M385 370h1M424 370h1M54 371h1M84 371h1M94 371h1M108 371h1M137 371h1M341 371h1M358 371h1M370 371h1M373 371h1M384 371h1M424 371h1M55 372h1M83 372h1M95 372h1M108 372h2M138 372h1M200 372h2M340 372h1M359 372h1M369 372h1M374 372h1M383 372h1M423 372h1M56 373h1M82 373h1M96 373h1M107 373h1M110 373h1M139 373h2M197 373h3M338 373h2M360 373h1M368 373h1M375 373h2M382 373h1M422 373h1M57 374h1M80 374h2M97 374h1M106 374h1M111 374h1M141 374h1M195 374h2M337 374h1M361 374h1M367 374h1M377 374h1M381 374h1M421 374h1M57 375h1M79 375h1M98 375h1M105 375h1M112 375h1M142 375h1M192 375h3M213 375h1M336 375h1M362 375h1M366 375h1M378 375h1M380 375h1M421 375h1M58 376h1M78 376h1M99 376h1M105 376h1M113 376h1M143 376h2M190 376h2M212 376h1M334 376h2M363 376h1M365 376h1M379 376h1M420 376h1M59 377h1M77 377h1M100 377h1M104 377h1M114 377h1M145 377h1M212 377h1M227 377h1M249 377h2M333 377h1M364 377h1M378 377h1M419 377h1M60 378h1M76 378h1M101 378h1M103 378h1M115 378h1M146 378h2M211 378h1M227 378h1M243 378h1M251 378h3M331 378h2M363 378h1M377 378h1M418 378h1M60 379h1M74 379h2M102 379h1M116 379h2M148 379h1M211 379h1M227 379h1M243 379h1M254 379h4M330 379h1M361 379h2M376 379h1M418 379h1M61 380h1M73 380h1M103 380h1M118 380h1M149 380h2M210 380h1M227 380h1M244 380h1M258 380h3M328 380h2M360 380h1M375 380h1M417 380h1M62 381h1M72 381h1M104 381h1M119 381h1M151 381h1M210 381h1M228 381h1M244 381h1M261 381h3M327 381h1M359 381h2M374 381h1M416 381h1M63 382h1M71 382h1M105 382h1M120 382h1M152 382h2M209 382h1M228 382h1M245 382h1M264 382h2M325 382h2M358 382h1M361 382h1M373 382h1M415 382h1M64 383h1M70 383h1M106 383h1M120 383h2M154 383h2M228 383h1M245 383h1M323 383h2M357 383h1M362 383h1M372 383h1M414 383h1M64 384h1M68 384h2M107 384h1M119 384h1M122 384h2M156 384h2M228 384h1M246 384h1M321 384h2M355 384h2M363 384h1M371 384h1M414 384h1M65 385h1M67 385h1M108 385h1M118 385h1M124 385h1M158 385h1M246 385h1M320 385h1M354 385h1M363 385h1M370 385h1M413 385h1M66 386h1M109 386h1M117 386h1M125 386h1M159 386h2M318 386h2M353 386h1M364 386h1M369 386h1M412 386h1M67 387h1M110 387h2M117 387h1M126 387h2M161 387h2M316 387h2M351 387h2M365 387h1M367 387h2M411 387h1M68 388h1M112 388h1M116 388h1M128 388h1M163 388h2M314 388h2M350 388h1M366 388h1M410 388h1M69 389h1M113 389h1M115 389h1M129 389h1M165 389h1M312 389h2M349 389h1M365 389h1M367 389h1M409 389h1M70 390h1M114 390h1M130 390h2M166 390h3M310 390h2M347 390h2M364 390h1M368 390h1M408 390h1M70 391h1M115 391h1M132 391h1M166 391h1M169 391h2M308 391h2M346 391h2M363 391h1M369 391h1M408 391h1M71 392h1M116 392h2M133 392h1M165 392h1M171 392h3M305 392h3M345 392h1M348 392h1M361 392h2M369 392h1M407 392h1M72 393h1M118 393h1M133 393h3M165 393h1M174 393h2M303 393h2M343 393h2M348 393h1M360 393h1M370 393h1M406 393h1M73 394h1M119 394h1M132 394h1M136 394h1M164 394h1M176 394h3M300 394h3M342 394h1M349 394h1M359 394h1M371 394h1M405 394h1M74 395h1M120 395h2M132 395h1M137 395h2M164 395h1M179 395h2M298 395h2M340 395h2M350 395h1M357 395h2M372 395h1M404 395h1M75 396h1M122 396h1M131 396h1M139 396h2M163 396h1M181 396h3M295 396h3M338 396h2M351 396h1M356 396h1M373 396h1M403 396h1M76 397h1M123 397h1M130 397h1M141 397h1M163 397h1M184 397h3M292 397h3M337 397h1M351 397h1M355 397h1M374 397h1M402 397h1M77 398h1M124 398h2M129 398h1M142 398h2M162 398h1M187 398h3M289 398h3M335 398h2M352 398h3M374 398h1M401 398h1M78 399h1M126 399h1M129 399h1M144 399h2M162 399h1M190 399h3M286 399h3M333 399h2M352 399h2M375 399h1M400 399h1M79 400h1M127 400h2M146 400h1M161 400h1M193 400h4M282 400h4M332 400h2M351 400h1M376 400h1M399 400h1M80 401h1M128 401h2M147 401h2M161 401h1M197 401h4M278 401h4M330 401h2M334 401h1M349 401h2M377 401h1M398 401h1M81 402h1M130 402h1M146 402h1M149 402h2M160 402h1M201 402h4M274 402h4M328 402h2M334 402h1M348 402h1M378 402h1M397 402h1M82 403h1M131 403h2M146 403h1M151 403h2M160 403h1M205 403h6M268 403h6M326 403h2M335 403h1M346 403h2M379 403h1M396 403h1M83 404h1M133 404h1M145 404h1M153 404h2M159 404h1M211 404h6M262 404h7M324 404h2M335 404h1M345 404h1M379 404h1M395 404h1M84 405h1M134 405h2M145 405h1M155 405h2M159 405h1M217 405h10M252 405h10M268 405h1M322 405h2M336 405h1M343 405h2M380 405h1M394 405h1M85 406h1M136 406h2M144 406h1M157 406h2M227 406h25M268 406h1M320 406h2M337 406h1M341 406h2M381 406h1M393 406h1M86 407h1M138 407h1M143 407h1M158 407h3M268 407h1M318 407h2M337 407h1M340 407h1M382 407h1M392 407h1M87 408h2M139 408h2M143 408h1M161 408h2M269 408h1M316 408h2M319 408h1M338 408h2M383 408h1M390 408h2M89 409h1M141 409h2M162 409h3M269 409h1M314 409h2M320 409h1M336 409h2M384 409h1M389 409h1M90 410h1M143 410h2M162 410h1M165 410h3M269 410h1M311 410h3M320 410h1M334 410h2M384 410h1M388 410h1M91 411h1M145 411h1M161 411h1M168 411h2M269 411h1M309 411h2M321 411h1M333 411h1M385 411h1M387 411h1M92 412h1M146 412h2M161 412h1M170 412h2M269 412h1M307 412h2M321 412h1M331 412h2M386 412h1M93 413h1M148 413h2M160 413h1M172 413h3M269 413h1M304 413h3M322 413h1M329 413h2M385 413h1M94 414h2M150 414h2M160 414h1M175 414h3M270 414h1M301 414h4M322 414h1M327 414h2M383 414h2M96 415h1M152 415h2M159 415h1M177 415h4M270 415h1M298 415h3M304 415h1M323 415h1M325 415h2M382 415h1M97 416h1M154 416h2M159 416h1M177 416h1M181 416h3M270 416h1M295 416h3M305 416h1M323 416h2M381 416h1M98 417h1M156 417h3M176 417h1M184 417h3M270 417h1M292 417h3M305 417h1M320 417h3M380 417h1M99 418h2M159 418h2M176 418h1M187 418h4M270 418h1M288 418h4M305 418h1M318 418h2M378 418h2M101 419h1M161 419h2M175 419h1M191 419h4M270 419h1M284 419h4M289 419h1M306 419h1M316 419h2M377 419h1M102 420h1M163 420h3M175 420h1M192 420h1M195 420h4M271 420h1M280 420h4M289 420h1M306 420h1M313 420h3M376 420h1M103 421h2M166 421h2M174 421h1M192 421h1M199 421h5M271 421h1M275 421h5M289 421h1M306 421h1M311 421h2M374 421h2M105 422h1M168 422h3M174 422h1M191 422h1M204 422h5M270 422h5M290 422h1M307 422h4M373 422h1M106 423h1M171 423h3M191 423h1M208 423h8M263 423h7M271 423h1M273 423h1M290 423h1M306 423h2M372 423h1M107 424h2M173 424h3M191 424h1M208 424h1M216 424h10M253 424h10M273 424h1M290 424h1M303 424h3M370 424h2M109 425h1M173 425h1M176 425h3M191 425h1M208 425h1M224 425h1M226 425h27M257 425h1M274 425h1M290 425h1M300 425h3M369 425h1M110 426h2M172 426h1M179 426h3M191 426h1M207 426h1M224 426h1M240 426h1M257 426h1M274 426h1M291 426h1M297 426h3M367 426h2M112 427h1M172 427h1M182 427h4M190 427h1M207 427h1M224 427h1M240 427h1M257 427h1M274 427h1M291 427h1M293 427h4M366 427h1M113 428h2M172 428h1M186 428h3M190 428h1M207 428h1M224 428h1M240 428h1M257 428h1M274 428h1M290 428h3M364 428h2M115 429h1M171 429h1M189 429h4M207 429h1M224 429h1M240 429h1M257 429h1M274 429h1M286 429h4M363 429h1M116 430h2M171 430h1M193 430h5M206 430h1M223 430h1M240 430h1M258 430h1M275 430h1M281 430h5M361 430h2M118 431h1M171 431h1M198 431h5M206 431h1M223 431h1M241 431h1M258 431h1M275 431h6M360 431h1M119 432h2M170 432h1M203 432h5M223 432h1M241 432h1M258 432h1M271 432h5M358 432h2M121 433h1M170 433h1M208 433h7M223 433h1M241 433h1M258 433h1M264 433h7M275 433h1M357 433h1M122 434h2M170 434h1M215 434h11M241 434h1M253 434h11M275 434h1M355 434h2M124 435h2M169 435h1M226 435h27M276 435h1M353 435h2M126 436h2M169 436h1M276 436h1M351 436h2M128 437h1M169 437h1M276 437h1M350 437h1M129 438h2M168 438h1M276 438h1M348 438h2M131 439h2M168 439h1M276 439h1M346 439h2M133 440h2M167 440h1M276 440h1M344 440h2M135 441h2M167 441h1M277 441h1M342 441h2M137 442h2M167 442h1M277 442h1M340 442h2M139 443h2M166 443h1M277 443h1M338 443h2M141 444h2M166 444h1M277 444h1M336 444h2M143 445h2M166 445h1M277 445h1M334 445h2M145 446h2M165 446h1M277 446h1M332 446h2M147 447h3M165 447h1M278 447h1M329 447h3M150 448h2M165 448h1M278 448h1M327 448h2M152 449h3M164 449h1M278 449h1M324 449h3M155 450h2M164 450h1M278 450h1M322 450h2M157 451h3M164 451h1M278 451h1M319 451h3M160 452h2M163 452h1M278 452h1M317 452h2M162 453h3M279 453h1M314 453h3M165 454h3M279 454h1M311 454h3M168 455h3M279 455h1M308 455h3M171 456h4M279 456h1M304 456h4M175 457h3M279 457h1M301 457h3M178 458h4M279 458h1M297 458h4M182 459h4M280 459h1M293 459h4M186 460h4M280 460h1M289 460h4M190 461h5M280 461h1M284 461h5M195 462h5M279 462h5M200 463h6M273 463h6M206 464h7M266 464h7M213 465h11M255 465h11M224 466h31"/>
<path stroke="#808080" d="M227 44h1M231 44h1M234 44h1M241 44h1M244 44h1M248 44h1M251 44h1M217 45h1M224 45h1M227 45h1M231 45h1M234 45h1M241 45h1M244 45h1M248 45h1M251 45h1M258 45h1M261 45h1M210 46h1M214 46h1M217 46h1M224 46h1M227 46h1M231 46h1M234 46h1M241 46h1M244 46h1M248 46h1M251 46h1M258 46h1M261 46h1M265 46h1M268 46h1M207 47h1M210 47h1M214 47h1M217 47h1M224 47h1M227 47h1M231 47h1M234 47h1M241 47h1M244 47h1M248 47h1M251 47h1M258 47h1M261 47h1M265 47h1M268 47h1M275 47h1M200 48h1M207 48h1M211 48h1M214 48h1M217 48h1M224 48h1M228 48h1M231 48h1M234 48h1M241 48h1M244 48h1M247 48h1M251 48h1M258 48h1M261 48h1M264 48h1M268 48h1M275 48h1M278 48h1M193 49h1M197 49h1M200 49h1M207 49h1M211 49h1M214 49h1M218 49h1M225 49h1M228 49h1M231 49h1M234 49h1M241 49h1M244 49h1M247 49h1M251 49h1M257 49h1M260 49h1M264 49h1M268 49h1M274 49h1M278 49h1M282 49h1M285 49h1M190 50h1M194 50h1M197 50h1M201 50h1M207 50h1M211 50h1M215 50h1M218 50h1M225 50h1M228 50h1M231 50h1M234 50h1M241 50h1M244 50h1M247 50h1M251 50h1M257 50h1M260 50h1M264 50h1M267 50h1M274 50h1M277 50h1M282 50h1M285 50h1M190 51h1M194 51h1M198 51h1M201 51h1M208 51h1M211 51h1M215 51h1M218 51h1M225 51h1M228 51h1M231 51h1M234 51h1M241 51h1M244 51h1M247 51h1M251 51h1M257 51h1M260 51h1M264 51h1M267 51h1M274 51h1M277 51h1M281 51h1M284 51h1M292 51h1M184 52h1M191 52h1M194 52h1M198 52h1M201 52h1M208 52h1M211 52h1M215 52h1M218 52h1M225 52h1M228 52h1M231 52h1M234 52h1M241 52h1M244 52h1M247 52h1M251 52h1M257 52h1M260 52h1M263 52h1M267 52h1M274 52h1M277 52h1M281 52h1M284 52h1M291 52h1M295 52h1M180 53h1M184 53h1M191 53h1M195 53h1M198 53h1M201 53h1M208 53h1M212 53h1M215 53h1M218 53h1M225 53h1M257 53h1M260 53h1M263 53h1M267 53h1M274 53h1M277 53h1M281 53h1M284 53h1M291 53h1M294 53h1M298 53h1M177 54h1M181 54h1M185 54h1M191 54h1M195 54h1M198 54h1M202 54h1M208 54h1M212 54h1M215 54h1M263 54h1M267 54h1M273 54h1M276 54h1M281 54h1M284 54h1M291 54h1M294 54h1M297 54h1M301 54h1M174 55h1M178 55h1M181 55h1M185 55h1M191 55h1M195 55h1M199 55h1M202 55h1M208 55h1M273 55h1M276 55h1M280 55h1M284 55h1M290 55h1M294 55h1M297 55h1M300 55h1M308 55h1M175 56h1M178 56h1M181 56h1M185 56h1M192 56h1M195 56h1M199 56h1M202 56h1M276 56h1M280 56h1M283 56h1M290 56h1M293 56h1M297 56h1M300 56h1M175 57h1M178 57h1M182 57h1M185 57h1M192 57h1M196 57h1M280 57h1M283 57h1M290 57h1M293 57h1M296 57h1M300 57h1M307 57h1M168 58h1M175 58h1M179 58h1M182 58h1M186 58h1M192 58h1M289 58h1M293 58h1M296 58h1M299 58h1M307 58h1M311 58h1M164 59h1M168 59h1M176 59h1M179 59h1M182 59h1M186 59h1M289 59h1M292 59h1M296 59h1M299 59h1M306 59h1M310 59h1M314 59h1M161 60h1M165 60h1M169 60h1M176 60h1M179 60h1M183 60h1M186 60h1M292 60h1M295 60h1M299 60h1M306 60h1M310 60h1M313 60h1M317 60h1M162 61h1M165 61h1M169 61h1M176 61h1M180 61h1M183 61h1M295 61h1M298 61h1M305 61h1M309 61h1M313 61h1M316 61h1M159 62h1M162 62h1M166 62h1M170 62h1M177 62h1M180 62h1M298 62h1M305 62h1M309 62h1M312 62h1M316 62h1M159 63h1M163 63h1M166 63h1M170 63h1M177 63h1M304 63h1M308 63h1M312 63h1M315 63h1M323 63h1M152 64h1M160 64h1M163 64h1M167 64h1M171 64h1M304 64h1M308 64h1M311 64h1M315 64h1M323 64h1M153 65h1M160 65h1M164 65h1M167 65h1M171 65h1M307 65h1M311 65h1M314 65h1M322 65h1M326 65h1M149 66h1M153 66h1M161 66h1M164 66h1M168 66h1M310 66h1M314 66h1M322 66h1M326 66h1M329 66h1M146 67h1M150 67h1M154 67h1M161 67h1M165 67h1M313 67h1M321 67h1M325 67h1M329 67h1M147 68h1M150 68h1M154 68h1M162 68h1M321 68h1M324 68h1M328 68h1M332 68h1M143 69h1M147 69h1M151 69h1M155 69h1M162 69h1M320 69h1M324 69h1M328 69h1M332 69h1M144 70h1M148 70h1M151 70h1M155 70h1M320 70h1M323 70h1M327 70h1M331 70h1M144 71h1M148 71h1M152 71h1M156 71h1M323 71h1M327 71h1M330 71h1M338 71h1M145 72h1M149 72h1M152 72h1M156 72h1M322 72h1M326 72h1M330 72h1M338 72h1M138 73h1M145 73h1M149 73h1M153 73h1M326 73h1M329 73h1M337 73h1M341 73h1M134 74h1M138 74h1M146 74h1M150 74h1M329 74h1M336 74h1M341 74h1M344 74h1M135 75h1M139 75h1M146 75h1M150 75h1M328 75h1M336 75h1M340 75h1M343 75h1M132 76h1M135 76h1M140 76h1M147 76h1M335 76h1M339 76h1M343 76h1M347 76h1M132 77h1M136 77h1M140 77h1M335 77h1M339 77h1M342 77h1M346 77h1M129 78h1M133 78h1M137 78h1M141 78h1M334 78h1M338 78h1M341 78h1M346 78h1M130 79h1M134 79h1M137 79h1M141 79h1M338 79h1M341 79h1M345 79h1M130 80h1M134 80h1M138 80h1M337 80h1M340 80h1M344 80h1M131 81h1M135 81h1M138 81h1M340 81h1M344 81h1M352 81h1M124 82h1M132 82h1M135 82h1M343 82h1M351 82h1M124 83h1M133 83h1M136 83h1M343 83h1M350 83h1M355 83h1M121 84h1M125 84h1M133 84h1M350 84h1M354 84h1M358 84h1M122 85h1M126 85h1M349 85h1M353 85h1M357 85h1M122 86h1M126 86h1M348 86h1M353 86h1M357 86h1M118 87h1M123 87h1M127 87h1M347 87h1M352 87h1M356 87h1M360 87h1M119 88h1M124 88h1M127 88h1M351 88h1M355 88h1M359 88h1M115 89h1M120 89h1M125 89h1M128 89h1M312 89h1M350 89h1M354 89h1M358 89h1M116 90h1M120 90h1M125 90h1M354 90h1M358 90h1M117 91h1M121 91h1M311 91h1M353 91h1M357 91h1M365 91h1M118 92h1M122 92h1M356 92h1M364 92h1M110 93h1M119 93h1M123 93h1M310 93h1M355 93h1M363 93h1M368 93h1M111 94h1M120 94h1M363 94h1M367 94h1M108 95h1M112 95h1M309 95h1M362 95h1M366 95h1M109 96h1M113 96h1M361 96h1M366 96h1M371 96h1M110 97h1M114 97h1M308 97h1M360 97h1M365 97h1M370 97h1M105 98h1M110 98h1M115 98h1M364 98h1M369 98h1M373 98h1M106 99h1M111 99h1M307 99h1M363 99h1M368 99h1M372 99h1M103 100h1M107 100h1M112 100h1M367 100h1M371 100h1M104 101h1M108 101h1M113 101h1M306 101h1M366 101h1M370 101h1M105 102h1M109 102h1M369 102h1M105 103h1M110 103h1M305 103h1M368 103h1M378 103h1M106 104h1M377 104h1M98 105h1M107 105h1M304 105h1M375 105h2M380 105h1M99 106h1M108 106h1M374 106h1M379 106h1M96 107h1M100 107h1M303 107h1M373 107h1M378 107h1M97 108h1M101 108h1M372 108h1M377 108h1M383 108h1M98 109h1M102 109h1M302 109h1M376 109h1M382 109h1M93 110h1M99 110h1M103 110h1M375 110h1M380 110h2M385 110h1M94 111h1M100 111h1M301 111h1M379 111h1M384 111h1M95 112h2M101 112h1M378 112h1M383 112h1M91 113h1M97 113h1M300 113h1M377 113h1M382 113h1M92 114h1M98 114h1M381 114h1M93 115h2M99 115h1M127 115h1M299 115h1M380 115h1M389 115h1M95 116h1M317 116h1M388 116h1M96 117h1M129 117h1M298 117h1M316 117h1M387 117h1M87 118h1M97 118h1M316 118h1M386 118h1M391 118h1M88 119h1M131 119h1M297 119h1M315 119h1M385 119h1M390 119h1M84 120h1M89 120h2M314 120h1M384 120h1M388 120h2M85 121h2M91 121h1M132 121h1M296 121h1M314 121h1M387 121h1M394 121h1M87 122h1M92 122h1M313 122h1M386 122h1M392 122h2M83 123h1M88 123h1M93 123h1M134 123h1M295 123h1M385 123h1M391 123h1M84 124h1M89 124h2M390 124h1M395 124h2M85 125h2M91 125h1M136 125h1M294 125h1M388 125h2M394 125h1M81 126h1M87 126h1M392 126h2M82 127h1M88 127h1M138 127h1M293 127h1M390 127h2M83 128h2M89 128h1M389 128h1M85 129h1M140 129h1M292 129h1M400 129h1M86 130h1M308 130h1M398 130h2M76 131h1M87 131h1M141 131h1M291 131h1M397 131h1M77 132h2M307 132h1M396 132h1M401 132h2M79 133h1M143 133h1M290 133h1M394 133h2M400 133h1M74 134h1M80 134h2M306 134h1M398 134h2M404 134h1M75 135h2M82 135h2M145 135h1M289 135h1M396 135h2M402 135h2M77 136h1M304 136h1M395 136h1M401 136h1M73 137h2M78 137h2M147 137h1M288 137h1M399 137h2M75 138h1M80 138h2M303 138h1M397 138h2M404 138h2M76 139h2M149 139h1M287 139h1M403 139h1M71 140h2M78 140h2M401 140h2M73 141h1M80 141h1M150 141h1M286 141h1M399 141h2M74 142h2M76 143h2M152 143h1M285 143h1M409 143h1M78 144h1M299 144h1M407 144h2M154 145h1M284 145h1M405 145h2M68 146h2M403 146h2M411 146h1M70 147h1M156 147h1M283 147h1M402 147h1M409 147h2M71 148h2M407 148h2M66 149h2M73 149h2M158 149h1M283 149h1M405 149h2M412 149h1M68 150h2M75 150h1M403 150h2M410 150h2M70 151h2M160 151h1M282 151h1M408 151h2M65 152h2M72 152h2M406 152h2M414 152h1M67 153h1M161 153h1M281 153h1M405 153h1M412 153h2M68 154h2M410 154h2M63 155h2M70 155h2M163 155h1M280 155h1M408 155h2M65 156h2M72 156h1M406 156h2M67 157h2M165 157h1M279 157h1M383 157h1M69 158h2M381 158h1M167 159h1M278 159h1M379 159h1M415 159h2M377 160h1M413 160h2M60 161h1M169 161h1M277 161h1M375 161h1M411 161h2M418 161h1M61 162h2M373 162h1M409 162h2M416 162h2M63 163h2M170 163h1M276 163h1M371 163h1M414 163h2M59 164h1M65 164h2M412 164h2M419 164h1M60 165h2M67 165h1M172 165h1M275 165h1M369 165h1M411 165h1M417 165h2M62 166h2M367 166h1M415 166h2M58 167h1M64 167h2M174 167h1M274 167h1M365 167h1M413 167h2M59 168h2M66 168h1M363 168h1M412 168h1M419 168h2M61 169h2M176 169h1M273 169h1M361 169h1M417 169h2M55 170h1M63 170h2M359 170h1M415 170h2M57 171h2M65 171h1M178 171h1M272 171h1M357 171h1M413 171h2M59 172h2M61 173h2M179 173h1M271 173h1M355 173h1M63 174h2M353 174h1M423 174h1M181 175h1M270 175h1M351 175h1M420 175h3M349 176h1M417 176h3M54 177h1M85 177h1M183 177h1M269 177h1M347 177h1M415 177h2M424 177h1M55 178h3M87 178h1M345 178h1M421 178h3M58 179h3M89 179h1M185 179h1M268 179h1M343 179h1M418 179h3M53 180h1M61 180h2M91 180h1M416 180h2M425 180h1M54 181h3M93 181h1M95 181h1M187 181h1M267 181h1M341 181h1M422 181h3M57 182h3M97 182h1M339 182h1M419 182h3M52 183h1M60 183h2M99 183h1M188 183h1M266 183h1M337 183h1M417 183h2M53 184h3M101 184h1M335 184h1M425 184h2M56 185h3M103 185h1M105 185h1M190 185h1M265 185h1M333 185h1M421 185h4M51 186h1M59 186h2M107 186h1M331 186h1M418 186h3M52 187h3M109 187h1M192 187h1M264 187h1M329 187h1M55 188h3M111 188h1M58 189h2M113 189h1M115 189h1M194 189h1M263 189h1M327 189h1M117 190h1M325 190h1M427 190h2M119 191h1M196 191h1M262 191h1M323 191h1M423 191h4M121 192h1M321 192h1M420 192h3M49 193h2M123 193h1M125 193h1M197 193h1M261 193h1M319 193h1M429 193h1M51 194h5M127 194h1M317 194h1M426 194h3M56 195h2M129 195h1M199 195h1M260 195h1M315 195h1M422 195h4M49 196h2M131 196h1M421 196h1M51 197h4M133 197h1M135 197h1M201 197h1M259 197h1M313 197h1M428 197h2M55 198h3M137 198h1M311 198h1M424 198h4M139 199h1M203 199h1M258 199h1M309 199h1M422 199h2M48 200h2M141 200h1M307 200h1M429 200h2M50 201h4M143 201h1M145 201h1M205 201h1M257 201h1M305 201h1M425 201h4M54 202h3M147 202h1M303 202h1M422 202h3M47 203h2M149 203h1M206 203h1M256 203h1M49 204h5M151 204h1M301 204h1M54 205h2M153 205h1M155 205h1M208 205h1M255 205h1M299 205h1M157 206h1M297 206h1M159 207h1M210 207h1M254 207h1M295 207h1M428 207h4M161 208h1M293 208h1M423 208h5M163 209h1M165 209h1M212 209h1M254 209h1M291 209h1M46 210h4M167 210h1M289 210h1M431 210h2M50 211h5M169 211h1M214 211h1M253 211h1M426 211h5M171 212h1M287 212h1M424 212h2M46 213h2M173 213h1M175 213h1M216 213h1M252 213h1M285 213h1M48 214h4M177 214h1M283 214h1M429 214h4M52 215h3M179 215h1M217 215h1M251 215h1M281 215h1M424 215h5M181 216h1M279 216h1M45 217h4M183 217h1M185 217h1M219 217h1M250 217h1M277 217h1M430 217h4M49 218h5M187 218h1M275 218h1M425 218h5M189 219h1M221 219h1M249 219h1M380 219h4M45 220h4M191 220h1M273 220h1M376 220h4M49 221h5M193 221h1M195 221h1M223 221h1M248 221h1M271 221h1M364 221h1M197 222h1M269 222h1M360 222h1M199 223h1M225 223h1M247 223h1M267 223h1M350 223h1M352 223h1M354 223h1M356 223h1M201 224h1M265 224h1M346 224h1M348 224h1M430 224h4M203 225h1M205 225h1M226 225h1M246 225h1M263 225h1M425 225h5M207 226h1M261 226h1M44 227h9M209 227h1M228 227h1M245 227h1M431 227h4M211 228h1M259 228h1M426 228h5M213 229h1M215 229h1M230 229h1M244 229h1M257 229h1M44 230h4M217 230h1M255 230h1M48 231h5M219 231h1M232 231h1M243 231h1M253 231h1M426 231h9M221 232h1M251 232h1M223 233h1M225 233h1M234 233h1M242 233h1M249 233h1M44 234h9M227 234h1M247 234h1M426 234h9M229 235h1M235 235h1M241 235h1M231 236h1M245 236h1M44 237h9M233 237h1M235 237h1M237 237h1M240 237h1M243 237h1M237 238h1M241 238h1M239 239h1M237 240h1M241 240h1M235 241h1M238 241h1M241 241h1M243 241h1M245 241h1M426 241h9M233 242h1M247 242h1M237 243h1M243 243h1M249 243h1M44 244h9M231 244h1M251 244h1M426 244h9M229 245h1M236 245h1M244 245h1M253 245h1M255 245h1M227 246h1M257 246h1M44 247h9M225 247h1M235 247h1M246 247h1M259 247h1M426 247h5M223 248h1M261 248h1M431 248h4M221 249h1M234 249h1M248 249h1M263 249h1M265 249h1M48 250h5M219 250h1M267 250h1M44 251h4M233 251h1M250 251h1M269 251h1M426 251h9M217 252h1M271 252h1M49 253h5M215 253h1M232 253h1M252 253h1M273 253h1M275 253h1M45 254h4M213 254h1M277 254h1M211 255h1M231 255h1M253 255h1M279 255h1M209 256h1M281 256h1M207 257h1M230 257h1M255 257h1M283 257h1M285 257h1M425 257h5M205 258h1M287 258h1M430 258h4M229 259h1M257 259h1M289 259h1M49 260h5M203 260h1M291 260h1M425 260h5M45 261h4M201 261h1M228 261h1M259 261h1M293 261h1M295 261h1M430 261h4M199 262h1M297 262h1M50 263h5M197 263h1M227 263h1M261 263h1M299 263h1M424 263h3M46 264h4M195 264h1M301 264h1M427 264h4M193 265h1M226 265h1M262 265h1M303 265h1M305 265h1M431 265h2M53 266h2M191 266h1M307 266h1M48 267h5M225 267h1M264 267h1M309 267h1M424 267h5M46 268h2M189 268h1M311 268h1M429 268h4M187 269h1M224 269h1M266 269h1M313 269h1M315 269h1M51 270h5M185 270h1M317 270h1M47 271h4M183 271h1M224 271h1M268 271h1M319 271h1M181 272h1M321 272h1M179 273h1M223 273h1M270 273h1M323 273h1M325 273h1M423 273h2M177 274h1M327 274h1M425 274h5M222 275h1M272 275h1M329 275h1M430 275h2M54 276h3M175 276h1M331 276h1M422 276h3M50 277h4M173 277h1M221 277h1M273 277h1M333 277h1M335 277h1M425 277h4M48 278h2M171 278h1M337 278h1M429 278h2M55 279h2M169 279h1M220 279h1M275 279h1M339 279h1M51 280h4M167 280h1M341 280h1M421 280h3M49 281h2M165 281h1M219 281h1M277 281h1M343 281h1M345 281h1M424 281h4M57 282h1M347 282h1M428 282h2M53 283h4M163 283h1M218 283h1M279 283h1M349 283h1M421 283h2M50 284h3M161 284h1M351 284h1M423 284h5M49 285h1M159 285h1M217 285h1M281 285h1M353 285h1M355 285h1M428 285h2M56 286h3M157 286h1M357 286h1M52 287h4M155 287h1M216 287h1M282 287h1M359 287h1M50 288h2M153 288h1M361 288h1M151 289h1M215 289h1M284 289h1M363 289h1M365 289h1M419 289h2M367 290h1M421 290h3M149 291h1M214 291h1M286 291h1M369 291h1M424 291h3M58 292h3M147 292h1M371 292h1M418 292h2M427 292h1M54 293h4M145 293h1M213 293h1M288 293h1M373 293h1M375 293h1M420 293h3M52 294h2M143 294h1M377 294h1M423 294h3M60 295h2M141 295h1M212 295h1M290 295h1M379 295h1M417 295h2M426 295h1M57 296h3M139 296h1M381 296h1M419 296h3M54 297h3M137 297h1M211 297h1M291 297h1M383 297h1M385 297h1M422 297h3M53 298h1M61 298h2M387 298h1M416 298h2M425 298h1M58 299h3M135 299h1M210 299h1M293 299h1M389 299h1M418 299h3M55 300h3M133 300h1M391 300h1M421 300h3M54 301h1M62 301h2M131 301h1M209 301h1M295 301h1M393 301h1M424 301h1M59 302h3M129 302h1M56 303h3M127 303h1M208 303h1M297 303h1M55 304h1M125 304h1M414 304h2M123 305h1M207 305h1M299 305h1M416 305h2M418 306h2M64 307h2M121 307h1M206 307h1M300 307h1M413 307h1M420 307h2M62 308h2M119 308h1M414 308h2M423 308h1M60 309h2M117 309h1M205 309h1M302 309h1M416 309h2M58 310h2M66 310h1M115 310h1M412 310h1M418 310h2M64 311h2M113 311h1M204 311h1M304 311h1M413 311h2M420 311h1M62 312h2M111 312h1M415 312h2M60 313h2M67 313h1M109 313h1M203 313h1M306 313h1M411 313h1M417 313h2M59 314h1M65 314h2M412 314h2M419 314h1M63 315h2M107 315h1M202 315h1M308 315h1M414 315h2M61 316h2M68 316h2M105 316h1M416 316h2M60 317h1M66 317h2M103 317h1M201 317h1M309 317h1M418 317h1M64 318h2M101 318h1M62 319h2M99 319h1M200 319h1M311 319h1M97 320h1M408 320h2M95 321h1M199 321h1M313 321h1M410 321h2M71 322h2M406 322h1M412 322h2M69 323h2M198 323h1M315 323h1M407 323h2M414 323h2M67 324h2M409 324h2M65 325h2M73 325h1M197 325h1M317 325h1M411 325h1M64 326h1M71 326h2M405 326h2M412 326h2M69 327h2M196 327h1M318 327h1M407 327h2M67 328h2M74 328h2M403 328h1M409 328h2M66 329h1M72 329h2M195 329h1M404 329h2M411 329h2M70 330h2M406 330h2M68 331h2M76 331h1M195 331h1M322 331h1M408 331h1M67 332h1M74 332h2M409 332h2M72 333h2M194 333h1M70 334h2M400 334h1M69 335h1M193 335h1M326 335h1M401 335h2M403 336h2M78 337h2M192 337h1M328 337h1M398 337h1M405 337h1M76 338h2M399 338h2M406 338h2M75 339h1M191 339h1M329 339h1M401 339h2M73 340h2M80 340h2M397 340h2M403 340h1M78 341h2M190 341h1M331 341h1M399 341h2M404 341h2M77 342h1M83 342h1M401 342h1M75 343h2M81 343h2M189 343h1M333 343h1M395 343h2M402 343h2M74 344h1M79 344h2M397 344h2M404 344h1M78 345h1M83 345h2M188 345h1M399 345h1M76 346h2M82 346h1M400 346h2M81 347h1M187 347h1M391 347h1M402 347h1M79 348h2M392 348h1M78 349h1M186 349h1M393 349h1M89 350h1M389 350h1M394 350h2M87 351h2M185 351h1M340 351h1M390 351h1M396 351h1M85 352h2M391 352h1M397 352h1M84 353h1M89 353h2M184 353h1M387 353h1M392 353h2M82 354h2M88 354h1M388 354h2M394 354h1M87 355h1M93 355h1M183 355h1M385 355h1M390 355h1M395 355h1M85 356h2M92 356h1M386 356h1M391 356h1M84 357h1M91 357h1M182 357h1M387 357h1M392 357h2M89 358h2M94 358h1M388 358h2M394 358h1M88 359h1M93 359h1M181 359h1M347 359h1M390 359h1M87 360h1M92 360h1M381 360h1M391 360h1M91 361h1M180 361h1M349 361h1M382 361h1M90 362h1M383 362h1M89 363h1M98 363h1M179 363h1M351 363h1M379 363h1M384 363h2M97 364h1M380 364h1M386 364h1M96 365h1M101 365h1M178 365h1M381 365h1M387 365h1M95 366h1M100 366h1M377 366h1M382 366h2M94 367h1M99 367h1M177 367h1M378 367h1M384 367h1M93 368h1M97 368h2M103 368h1M375 368h1M379 368h1M385 368h1M96 369h1M102 369h1M176 369h1M376 369h1M380 369h1M95 370h1M101 370h1M106 370h1M377 370h1M381 370h1M100 371h1M105 371h1M175 371h1M378 371h1M382 371h1M99 372h1M104 372h1M370 372h1M379 372h1M98 373h1M102 373h2M174 373h1M371 373h1M380 373h1M101 374h1M372 374h1M100 375h1M110 375h1M173 375h1M368 375h1M373 375h1M109 376h1M369 376h1M373 376h1M108 377h1M112 377h1M172 377h1M365 377h1M370 377h1M374 377h1M107 378h1M111 378h1M366 378h1M371 378h1M375 378h1M106 379h1M110 379h1M115 379h1M171 379h1M367 379h1M372 379h1M105 380h1M109 380h1M114 380h1M363 380h1M368 380h1M373 380h1M108 381h1M113 381h1M118 381h1M170 381h1M364 381h1M368 381h1M107 382h1M112 382h1M117 382h1M365 382h1M369 382h1M112 383h1M116 383h1M169 383h1M366 383h1M370 383h1M111 384h1M115 384h1M358 384h1M367 384h1M110 385h1M115 385h1M123 385h1M168 385h1M355 385h1M359 385h1M368 385h1M114 386h1M122 386h1M356 386h1M360 386h1M113 387h1M121 387h1M125 387h1M167 387h1M357 387h1M361 387h1M120 388h1M124 388h1M353 388h1M358 388h1M362 388h1M120 389h1M124 389h1M128 389h1M166 389h1M350 389h1M353 389h1M358 389h1M363 389h1M119 390h1M123 390h1M127 390h1M351 390h1M354 390h1M359 390h1M118 391h1M122 391h1M126 391h1M131 391h1M351 391h1M355 391h1M360 391h1M121 392h1M125 392h1M130 392h1M352 392h1M356 392h1M121 393h1M125 393h1M129 393h1M352 393h1M356 393h1M120 394h1M124 394h1M128 394h1M345 394h1M353 394h1M357 394h1M123 395h1M128 395h1M135 395h1M342 395h1M345 395h1M354 395h1M127 396h1M135 396h1M343 396h1M346 396h1M354 396h1M126 397h1M134 397h1M138 397h1M340 397h1M343 397h1M347 397h1M134 398h1M138 398h1M141 398h1M340 398h1M344 398h1M348 398h1M133 399h1M137 399h1M140 399h1M337 399h1M341 399h1M344 399h1M348 399h1M132 400h1M137 400h1M140 400h1M144 400h1M337 400h1M341 400h1M345 400h1M349 400h1M132 401h1M136 401h1M139 401h1M143 401h1M338 401h1M342 401h1M346 401h1M131 402h1M135 402h1M139 402h1M143 402h1M331 402h1M338 402h1M343 402h1M346 402h1M135 403h1M138 403h1M142 403h1M150 403h1M328 403h1M332 403h1M339 403h1M343 403h1M134 404h1M137 404h1M142 404h1M149 404h1M328 404h1M332 404h1M340 404h1M344 404h1M137 405h1M141 405h1M149 405h1M152 405h1M325 405h1M329 405h1M333 405h1M340 405h1M140 406h1M148 406h1M152 406h1M156 406h1M322 406h1M326 406h1M329 406h1M333 406h1M140 407h1M148 407h1M151 407h1M155 407h1M322 407h1M326 407h1M330 407h1M334 407h1M147 408h1M151 408h1M155 408h1M158 408h1M323 408h1M327 408h1M330 408h1M334 408h1M146 409h1M150 409h1M154 409h1M158 409h1M316 409h1M323 409h1M327 409h1M331 409h1M335 409h1M146 410h1M150 410h1M154 410h1M157 410h1M316 410h1M324 410h1M328 410h1M331 410h1M149 411h1M153 411h1M157 411h1M165 411h1M313 411h1M317 411h1M324 411h1M328 411h1M332 411h1M149 412h1M152 412h1M156 412h1M164 412h1M168 412h1M310 412h1M314 412h1M317 412h1M325 412h1M329 412h1M152 413h1M156 413h1M164 413h1M167 413h1M171 413h1M307 413h1M311 413h1M314 413h1M318 413h1M325 413h1M155 414h1M163 414h1M167 414h1M170 414h1M174 414h1M307 414h1M311 414h1M315 414h1M318 414h1M326 414h1M155 415h1M163 415h1M166 415h1M170 415h1M174 415h1M301 415h1M308 415h1M312 415h1M315 415h1M319 415h1M162 416h1M166 416h1M169 416h1M173 416h1M180 416h1M298 416h1M301 416h1M308 416h1M312 416h1M316 416h1M319 416h1M162 417h1M165 417h1M169 417h1M173 417h1M180 417h1M183 417h1M295 417h1M298 417h1M302 417h1M309 417h1M313 417h1M316 417h1M161 418h1M165 418h1M168 418h1M172 418h1M179 418h1M183 418h1M186 418h1M292 418h1M295 418h1M299 418h1M302 418h1M309 418h1M313 418h1M317 418h1M164 419h1M168 419h1M172 419h1M179 419h1M182 419h1M186 419h1M189 419h1M292 419h1M296 419h1M299 419h1M302 419h1M310 419h1M314 419h1M167 420h1M171 420h1M179 420h1M182 420h1M185 420h1M189 420h1M286 420h1M292 420h1M296 420h1M299 420h1M303 420h1M310 420h1M171 421h1M178 421h1M182 421h1M185 421h1M188 421h1M195 421h1M198 421h1M282 421h1M286 421h1M293 421h1M296 421h1M300 421h1M303 421h1M178 422h1M181 422h1M185 422h1M188 422h1M195 422h1M198 422h1M202 422h1M276 422h1M279 422h1M283 422h1M286 422h1M293 422h1M297 422h1M300 422h1M303 422h1M170 423h1M178 423h1M181 423h1M184 423h1M188 423h1M194 423h1M198 423h1M202 423h1M205 423h1M270 423h1M276 423h1M279 423h1M283 423h1M287 423h1M293 423h1M297 423h1M300 423h1M304 423h1M177 424h1M181 424h1M184 424h1M187 424h1M194 424h1M197 424h1M202 424h1M205 424h1M211 424h1M215 424h1M263 424h1M266 424h1M270 424h1M276 424h1M280 424h1M283 424h1M287 424h1M293 424h1M297 424h1M301 424h1M180 425h1M184 425h1M187 425h1M194 425h1M197 425h1M201 425h1M204 425h1M211 425h1M215 425h1M218 425h1M221 425h1M253 425h1M260 425h1M263 425h1M266 425h1M270 425h1M277 425h1M280 425h1M283 425h1M287 425h1M294 425h1M298 425h1M183 426h1M187 426h1M194 426h1M197 426h1M201 426h1M204 426h1M211 426h1M215 426h1M218 426h1M221 426h1M227 426h1M231 426h1M234 426h1M237 426h1M244 426h1M247 426h1M250 426h1M253 426h1M260 426h1M263 426h1M267 426h1M270 426h1M277 426h1M280 426h1M284 426h1M287 426h1M294 426h1M186 427h1M194 427h1M197 427h1M201 427h1M204 427h1M211 427h1M214 427h1M218 427h1M221 427h1M227 427h1M231 427h1M234 427h1M237 427h1M244 427h1M247 427h1M250 427h1M253 427h1M260 427h1M263 427h1M267 427h1M270 427h1M277 427h1M280 427h1M284 427h1M288 427h1M193 428h1M196 428h1M201 428h1M204 428h1M211 428h1M214 428h1M218 428h1M221 428h1M227 428h1M231 428h1M234 428h1M237 428h1M244 428h1M247 428h1M250 428h1M253 428h1M260 428h1M263 428h1M267 428h1M271 428h1M277 428h1M281 428h1M284 428h1M288 428h1M193 429h1M196 429h1M200 429h1M204 429h1M210 429h1M214 429h1M218 429h1M221 429h1M227 429h1M231 429h1M234 429h1M237 429h1M244 429h1M247 429h1M250 429h1M253 429h1M260 429h1M264 429h1M267 429h1M271 429h1M278 429h1M281 429h1M285 429h1M200 430h1M203 430h1M210 430h1M214 430h1M217 430h1M220 430h1M227 430h1M231 430h1M234 430h1M237 430h1M244 430h1M247 430h1M250 430h1M254 430h1M261 430h1M264 430h1M267 430h1M271 430h1M278 430h1M203 431h1M210 431h1M213 431h1M217 431h1M220 431h1M227 431h1M230 431h1M234 431h1M237 431h1M244 431h1M247 431h1M251 431h1M254 431h1M261 431h1M264 431h1M268 431h1M271 431h1M210 432h1M213 432h1M217 432h1M220 432h1M227 432h1M230 432h1M234 432h1M237 432h1M244 432h1M247 432h1M251 432h1M254 432h1M261 432h1M264 432h1M268 432h1M217 433h1M220 433h1M227 433h1M230 433h1M234 433h1M237 433h1M244 433h1M247 433h1M251 433h1M254 433h1M261 433h1M227 434h1M230 434h1M234 434h1M237 434h1M244 434h1M247 434h1M251 434h1"/>
<path stroke="#00ff00" d="M172 33h1M176 33h1M173 34h3M172 35h1M176 35h1M172 36h1M176 36h1M172 37h1M176 37h1M173 38h3M174 39h1M172 40h5M174 41h1M62 115h5M61 116h1M67 116h1M60 117h1M68 117h1M60 118h1M68 118h1M103 118h1M109 118h1M60 119h1M68 119h1M104 119h1M108 119h1M61 120h1M67 120h1M104 120h1M106 120h1M108 120h1M56 121h7M66 121h7M104 121h5M104 122h1M106 122h1M108 122h1M103 123h1M106 123h1M109 123h1M105 124h3M56 125h17M105 125h1M107 125h1M106 126h1M425 140h1M439 140h1M426 141h1M438 141h1M427 142h11M429 143h1M435 143h1M429 144h1M435 144h1M429 145h1M435 145h1M429 146h1M435 146h1M429 147h1M435 147h1M429 148h1M435 148h1M429 149h1M435 149h1M429 150h1M435 150h1M429 151h1M435 151h1M429 152h1M435 152h1M429 153h1M435 153h1M427 154h11M426 155h1M438 155h1M425 156h1M439 156h1M439 170h1M443 170h1M440 171h3M439 172h1M443 172h1M439 173h1M443 173h1M439 174h1M443 174h1M440 175h3M441 176h1M439 177h5M441 178h1M625 206h1M628 206h1M630 206h2M624 207h2M628 207h2M632 207h1M625 208h1M627 208h1M629 208h1M632 208h1M625 209h1M627 209h1M630 209h2M387 210h1M399 210h1M625 210h1M627 210h1M631 210h1M388 211h1M398 211h1M626 211h1M632 211h1M389 212h1M397 212h1M626 212h1M632 212h1M389 213h1M397 213h1M626 213h1M632 213h1M356 214h1M368 214h1M389 214h1M393 214h1M397 214h1M631 214h1M357 215h1M367 215h1M389 215h1M393 215h1M397 215h1M358 216h1M366 216h1M389 216h9M358 217h1M366 217h1M389 217h1M393 217h1M397 217h1M358 218h1M362 218h1M366 218h1M389 218h1M393 218h1M397 218h1M358 219h1M362 219h1M366 219h1M388 219h1M393 219h1M398 219h1M358 220h9M372 220h1M387 220h1M393 220h1M399 220h1M358 221h1M362 221h1M366 221h1M371 221h3M393 221h1M358 222h1M362 222h1M366 222h1M372 222h1M392 222h3M357 223h1M362 223h1M367 223h1M391 223h1M395 223h1M341 224h1M356 224h1M362 224h1M368 224h1M391 224h1M395 224h1M340 225h3M362 225h1M391 225h1M395 225h1M341 226h1M361 226h3M392 226h3M360 227h1M364 227h1M360 228h1M364 228h1M360 229h1M364 229h1M361 230h3M625 246h1M631 246h1M626 247h1M630 247h1M627 248h3M626 249h1M630 249h1M625 250h1M631 250h1M625 251h1M631 251h1M625 252h1M631 252h1M626 253h1M630 253h1M627 254h3M407 284h1M411 284h1M408 285h3M407 286h1M411 286h1M407 287h1M411 287h1M407 288h1M411 288h1M627 288h3M408 289h3M626 289h1M630 289h1M409 290h1M626 290h1M630 290h1M407 291h5M624 291h4M629 291h4M409 292h1M624 293h9M626 336h1M630 336h1M627 337h3M626 338h1M630 338h1M626 339h1M630 339h1M626 340h1M630 340h1M246 341h1M627 341h3M245 342h3M628 342h1M246 343h1M626 343h5M628 344h1M261 353h1M269 353h1M262 354h1M268 354h1M263 355h5M262 356h1M268 356h1M261 357h1M269 357h1M261 358h1M269 358h1M261 359h1M269 359h1M261 360h1M269 360h1M261 361h1M269 361h1M262 362h1M268 362h1M263 363h5M265 364h1M265 365h1M265 366h1M261 367h9M265 368h1M265 369h1M265 370h1M265 371h1M248 372h1M247 373h3M248 374h1M263 384h1M271 384h1M264 385h1M270 385h1M265 386h5M625 386h1M631 386h1M264 387h1M270 387h1M626 387h1M630 387h1M263 388h1M271 388h1M626 388h1M628 388h1M630 388h1M263 389h1M271 389h1M626 389h5M263 390h1M271 390h1M626 390h1M628 390h1M630 390h1M263 391h1M271 391h1M625 391h1M628 391h1M631 391h1M263 392h1M271 392h1M627 392h3M264 393h1M270 393h1M627 393h1M629 393h1M265 394h5M628 394h1M267 395h1M267 396h1M267 397h1M263 398h9M267 399h1M267 400h1M267 401h1M267 402h1M186 405h1M190 405h1M187 406h3M186 407h1M190 407h1M186 408h1M190 408h1M186 409h1M190 409h1M187 410h3M188 411h1M186 412h5M188 413h1M192 443h1M198 443h1M219 443h1M225 443h1M231 443h1M193 444h1M197 444h1M218 444h2M224 444h2M230 444h1M193 445h1M195 445h1M197 445h1M218 445h1M220 445h1M224 445h1M226 445h1M230 445h1M193 446h5M217 446h1M220 446h1M223 446h1M226 446h1M229 446h1M193 447h1M195 447h1M197 447h1M216 447h1M220 447h1M222 447h1M226 447h1M228 447h1M192 448h1M195 448h1M198 448h1M216 448h1M221 448h2M227 448h2M194 449h3M215 449h1M221 449h1M227 449h1M194 450h1M196 450h1M195 451h1M219 453h1M225 453h1M231 453h1M218 454h2M224 454h2M230 454h1M218 455h1M220 455h1M224 455h1M226 455h1M230 455h1M217 456h1M220 456h1M223 456h1M226 456h1M229 456h1M216 457h1M220 457h1M222 457h1M226 457h1M228 457h1M216 458h1M221 458h2M227 458h2M215 459h1M221 459h1M227 459h1"/>
<path stroke="#0000ff" d="M357 57h5M354 58h3M362 58h1M353 59h1M363 59h3M352 60h1M362 60h1M366 60h1M351 61h1M361 61h1M367 61h1M361 62h1M367 62h1M353 63h3M361 63h1M367 63h1M352 64h1M356 64h1M362 64h1M366 64h1M351 65h1M357 65h1M363 65h3M351 66h1M357 66h1M351 67h1M357 67h1M367 67h1M352 68h1M356 68h1M366 68h1M353 69h3M365 69h1M356 70h1M362 70h3M357 71h5M379 78h3M378 79h1M382 79h2M198 80h6M379 80h1M383 80h1M197 81h1M204 81h1M380 81h1M384 81h1M196 82h1M205 82h1M380 82h1M384 82h1M197 83h1M206 83h1M380 83h1M384 83h1M198 84h1M207 84h1M379 84h1M383 84h1M199 85h1M207 85h1M378 85h1M382 85h2M199 86h1M208 86h1M379 86h3M200 87h1M208 87h1M200 88h1M208 88h1M200 89h1M208 89h1M199 90h1M208 90h1M199 91h1M207 91h1M198 92h1M207 92h1M197 93h1M206 93h1M196 94h1M205 94h1M197 95h1M203 95h2M198 96h5M207 108h1M206 109h3M206 110h6M205 111h1M212 111h1M204 112h1M213 112h1M205 113h1M214 113h1M206 114h1M215 114h1M207 115h1M215 115h1M207 116h1M216 116h1M208 117h1M216 117h1M208 118h1M216 118h1M208 119h1M216 119h1M207 120h1M216 120h1M207 121h1M215 121h1M206 122h1M215 122h1M205 123h1M214 123h1M204 124h1M213 124h1M205 125h1M211 125h2M375 125h1M378 125h1M381 125h1M206 126h5M375 126h1M377 126h1M379 126h1M381 126h1M375 127h1M378 127h1M381 127h1M376 128h1M380 128h1M377 129h3M378 130h1M376 131h5M378 132h1M378 133h1M215 138h1M214 139h3M215 140h1M66 186h1M69 186h1M72 186h1M65 187h2M68 187h3M72 187h2M66 188h1M69 188h1M72 188h1M67 189h1M69 189h1M71 189h1M68 190h3M28 191h1M31 191h1M34 191h1M69 191h1M28 192h1M30 192h1M32 192h1M34 192h1M67 192h5M28 193h1M31 193h1M34 193h1M69 193h1M29 194h1M33 194h1M69 194h1M30 195h3M31 196h1M29 197h5M31 198h1M31 199h1M19 215h1M23 215h1M27 215h1M20 216h1M22 216h1M24 216h1M26 216h1M28 216h1M626 216h1M629 216h1M632 216h1M21 217h1M25 217h1M29 217h1M625 217h2M628 217h2M631 217h1M21 218h1M25 218h1M29 218h1M625 218h1M627 218h2M630 218h2M21 219h1M25 219h1M29 219h1M624 219h1M627 219h1M630 219h1M21 220h1M25 220h1M29 220h1M21 221h1M25 221h1M29 221h1M626 221h1M629 221h1M632 221h1M21 222h1M25 222h1M29 222h1M625 222h2M628 222h2M631 222h1M21 223h1M25 223h1M29 223h1M625 223h1M627 223h2M630 223h2M21 224h1M25 224h1M29 224h1M624 224h1M627 224h1M630 224h1M21 225h1M25 225h1M29 225h1M21 226h1M25 226h1M29 226h1M34 226h1M21 227h1M25 227h1M29 227h1M33 227h3M21 228h1M25 228h1M29 228h1M34 228h1M21 229h1M25 229h1M29 229h1M34 229h1M30 230h1M33 230h1M31 231h2M625 256h1M632 256h1M626 257h6M627 258h1M630 258h1M627 259h1M630 259h1M627 260h1M630 260h1M627 261h1M630 261h1M627 262h1M630 262h1M626 263h6M625 264h1M632 264h1M627 298h3M626 299h1M630 299h1M626 300h1M630 300h1M624 301h4M629 301h4M624 303h9M306 316h1M305 317h3M306 318h1M318 322h1M324 322h1M330 322h1M318 323h1M324 323h1M330 323h1M317 324h3M322 324h5M329 324h3M318 325h1M324 325h1M330 325h1M318 326h1M324 326h1M330 326h1M626 326h3M319 327h1M324 327h1M329 327h1M625 327h1M629 327h2M319 328h1M324 328h1M329 328h1M626 328h1M630 328h1M320 329h2M324 329h1M327 329h2M627 329h1M631 329h1M322 330h5M627 330h1M631 330h1M324 331h1M627 331h1M631 331h1M324 332h1M626 332h1M630 332h1M324 333h1M625 333h1M629 333h2M320 334h9M626 334h3M324 335h1M324 336h1M211 337h1M324 337h1M210 338h3M324 338h1M211 339h1M326 340h1M325 341h3M326 342h1M338 345h1M344 345h1M350 345h1M338 346h1M344 346h1M350 346h1M189 347h1M194 347h3M201 347h1M337 347h3M342 347h5M349 347h3M189 348h1M193 348h1M197 348h1M201 348h1M338 348h1M344 348h1M350 348h1M189 349h1M193 349h1M197 349h1M201 349h1M338 349h1M344 349h1M350 349h1M189 350h1M193 350h1M197 350h1M201 350h1M339 350h1M344 350h1M349 350h1M189 351h1M194 351h3M201 351h1M339 351h1M344 351h1M349 351h1M190 352h1M200 352h1M340 352h2M344 352h1M347 352h2M190 353h1M200 353h1M342 353h5M191 354h2M198 354h2M344 354h1M193 355h5M344 355h1M195 356h1M344 356h1M195 357h1M340 357h9M195 358h1M344 358h1M191 359h9M344 359h1M195 360h1M344 360h1M195 361h1M344 361h1M195 362h1M195 363h1M203 367h1M202 368h3M203 369h1M181 378h1M186 378h3M193 378h1M181 379h1M185 379h1M189 379h1M193 379h1M181 380h1M185 380h1M189 380h1M193 380h1M181 381h1M185 381h1M189 381h1M193 381h1M181 382h1M186 382h3M193 382h1M182 383h1M192 383h1M182 384h1M192 384h1M183 385h2M190 385h2M185 386h5M187 387h1M187 388h1M187 389h1M183 390h9M187 391h1M187 392h1M187 393h1M187 394h1M625 396h1M628 396h1M631 396h1M624 397h2M627 397h3M631 397h2M625 398h1M628 398h1M631 398h1M626 399h1M628 399h1M630 399h1M627 400h3M628 401h1M626 402h5M628 403h1M292 404h3M628 404h1M291 405h1M295 405h2M292 406h1M296 406h1M625 406h1M628 406h1M631 406h1M293 407h1M297 407h1M625 407h1M627 407h1M629 407h1M631 407h1M293 408h1M297 408h1M625 408h1M628 408h1M631 408h1M293 409h1M297 409h1M626 409h1M630 409h1M292 410h1M296 410h1M627 410h3M291 411h1M295 411h2M628 411h1M292 412h3M626 412h5M628 413h1M628 414h1M322 423h1M338 423h1M323 424h1M337 424h1M324 425h1M336 425h1M325 426h1M335 426h1M326 427h1M334 427h1M326 428h1M334 428h1M326 429h1M334 429h1M326 430h1M334 430h1M322 431h17M326 432h1M334 432h1M326 433h1M334 433h1M326 434h1M334 434h1M326 435h1M334 435h1M325 436h1M335 436h1M301 437h1M304 437h1M307 437h1M324 437h1M336 437h1M300 438h2M303 438h3M307 438h2M323 438h1M337 438h1M301 439h1M304 439h1M307 439h1M322 439h1M338 439h1M302 440h1M304 440h1M306 440h1M303 441h3M304 442h1M302 443h5M304 444h1M304 445h1"/>
<path stroke="#ff0000" d="M253 19h5M252 20h1M258 20h1M251 21h1M259 21h1M250 22h1M260 22h1M249 23h1M261 23h1M249 24h1M261 24h1M249 25h1M261 25h1M249 26h1M261 26h1M249 27h1M261 27h1M282 27h3M250 28h1M260 28h1M280 28h2M285 28h2M251 29h1M259 29h1M279 29h2M286 29h1M251 30h1M259 30h1M279 30h1M287 30h1M247 31h1M251 31h1M259 31h1M279 31h1M283 31h1M287 31h1M248 32h1M250 32h1M260 32h1M279 32h1M287 32h1M249 33h1M261 33h1M280 33h1M286 33h1M262 34h1M280 34h2M285 34h2M263 35h1M282 35h3M293 65h1M287 66h2M292 66h1M289 67h1M292 67h1M289 68h1M292 68h1M288 69h1M292 69h1M288 70h1M292 70h1M287 71h1M292 71h1M287 72h8M292 73h1M328 100h1M327 101h1M317 102h2M326 102h1M319 103h1M326 103h1M320 104h1M326 104h1M320 105h1M326 105h1M320 106h1M326 106h1M320 107h1M326 107h1M319 108h1M326 108h1M319 109h1M326 109h1M318 110h1M326 110h1M318 111h1M326 111h1M317 112h1M326 112h1M317 113h1M326 113h1M316 114h15M326 115h1M326 116h1M311 125h1M310 126h3M311 127h1M301 128h2M310 128h1M303 129h1M310 129h1M304 130h1M310 130h1M304 131h1M310 131h1M304 132h1M310 132h1M304 133h1M310 133h1M303 134h1M310 134h1M303 135h1M310 135h1M302 136h1M310 136h1M302 137h1M310 137h1M301 138h1M310 138h1M301 139h1M310 139h1M300 140h15M310 141h1M310 142h1M294 151h1M293 152h3M294 153h1M624 186h1M626 186h1M628 186h1M625 187h1M627 187h1M629 187h1M625 188h1M627 188h1M629 188h1M625 189h1M627 189h1M629 189h1M625 190h1M627 190h1M629 190h1M625 191h1M627 191h1M629 191h1M625 192h1M627 192h1M629 192h1M632 192h1M625 193h1M627 193h1M629 193h1M632 193h1M630 194h2M625 226h2M630 226h2M624 227h1M627 227h1M629 227h1M632 227h1M624 228h1M627 228h1M629 228h1M632 228h1M625 229h1M627 229h1M629 229h1M631 229h1M628 230h1M628 231h1M628 232h1M628 233h1M628 234h1M65 258h3M66 259h2M65 260h1M67 260h1M61 261h2M64 261h1M60 262h1M63 262h1M59 263h1M64 263h1M59 264h1M64 264h1M60 265h1M63 265h1M61 266h2M627 267h3M625 268h2M630 268h2M624 269h1M629 269h1M632 269h1M625 270h2M629 270h1M632 270h1M624 271h1M627 271h1M630 271h2M624 272h1M627 272h1M632 272h1M625 273h2M630 273h2M627 274h3M40 300h1M34 301h2M39 301h1M36 302h1M39 302h1M36 303h1M39 303h1M35 304h1M39 304h1M35 305h1M39 305h1M34 306h1M39 306h1M34 307h8M39 308h1M627 316h3M625 317h2M630 317h2M624 318h2M631 318h1M624 319h1M632 319h1M624 320h1M628 320h1M632 320h1M624 321h1M632 321h1M51 322h5M625 322h1M631 322h1M54 323h2M625 323h2M630 323h2M53 324h1M55 324h1M627 324h3M52 325h1M55 325h1M51 326h1M55 326h1M50 327h1M41 328h1M49 328h1M42 329h1M48 329h1M43 330h1M47 330h1M44 331h1M46 331h1M45 332h1M44 333h1M46 333h1M43 334h1M47 334h1M42 335h1M48 335h1M41 336h1M49 336h1M40 337h1M39 338h1M220 339h1M219 340h3M230 340h1M220 341h1M229 341h3M230 342h1M408 351h3M418 351h3M215 352h6M371 352h3M407 352h1M411 352h1M417 352h1M421 352h1M219 353h2M369 353h2M374 353h2M406 353h1M412 353h1M416 353h1M422 353h1M218 354h1M220 354h1M368 354h2M375 354h1M406 354h1M412 354h1M416 354h1M422 354h1M217 355h1M220 355h1M228 355h5M368 355h1M376 355h1M406 355h1M412 355h1M416 355h1M422 355h1M216 356h1M220 356h1M226 356h2M233 356h2M368 356h1M372 356h1M376 356h1M407 356h1M413 356h1M415 356h1M421 356h1M630 356h3M215 357h1M220 357h1M225 357h1M235 357h1M368 357h1M376 357h1M408 357h1M413 357h1M415 357h1M420 357h1M631 357h2M207 358h5M214 358h1M224 358h1M236 358h1M369 358h1M375 358h1M413 358h1M415 358h1M630 358h1M632 358h1M206 359h1M212 359h2M223 359h1M237 359h1M369 359h2M374 359h2M413 359h1M415 359h1M626 359h2M629 359h1M205 360h1M213 360h1M223 360h1M237 360h1M371 360h3M414 360h1M625 360h1M628 360h1M204 361h1M214 361h1M222 361h1M238 361h1M414 361h1M624 361h1M629 361h1M204 362h1M214 362h1M222 362h1M238 362h1M414 362h1M624 362h1M629 362h1M204 363h1M214 363h1M222 363h1M230 363h1M238 363h1M414 363h1M625 363h1M628 363h1M204 364h1M214 364h1M222 364h1M238 364h1M414 364h1M626 364h2M204 365h1M214 365h1M222 365h1M238 365h1M414 365h1M205 366h1M213 366h1M223 366h1M237 366h1M414 366h1M631 366h1M206 367h1M212 367h1M223 367h1M237 367h1M414 367h1M625 367h2M630 367h1M207 368h5M224 368h1M236 368h1M627 368h1M630 368h1M225 369h1M235 369h1M627 369h1M630 369h1M214 370h1M226 370h2M233 370h2M626 370h1M630 370h1M213 371h3M228 371h5M626 371h1M630 371h1M214 372h1M228 372h1M625 372h1M630 372h1M227 373h3M625 373h8M228 374h1M630 374h1M398 377h3M399 378h2M398 379h1M400 379h1M394 380h2M397 380h1M393 381h1M396 381h1M392 382h1M397 382h1M210 383h6M392 383h1M397 383h1M214 384h2M393 384h1M396 384h1M213 385h1M215 385h1M394 385h2M212 386h1M215 386h1M225 386h5M211 387h1M215 387h1M223 387h2M230 387h2M210 388h1M215 388h1M222 388h1M232 388h1M202 389h5M209 389h1M221 389h1M233 389h1M201 390h1M207 390h2M220 390h1M234 390h1M200 391h1M208 391h1M220 391h1M234 391h1M199 392h1M209 392h1M219 392h1M235 392h1M199 393h1M209 393h1M219 393h1M235 393h1M199 394h1M209 394h1M219 394h1M227 394h1M235 394h1M199 395h1M209 395h1M219 395h1M235 395h1M199 396h1M209 396h1M219 396h1M235 396h1M200 397h1M208 397h1M220 397h1M234 397h1M201 398h1M207 398h1M220 398h1M234 398h1M202 399h5M221 399h1M233 399h1M222 400h1M232 400h1M223 401h2M230 401h2M225 402h5"/>
<path stroke="#ffff00" d="M140 39h1M144 39h1M148 39h1M141 40h1M143 40h1M145 40h1M147 40h1M149 40h1M142 41h1M146 41h1M150 41h1M154 41h1M142 42h1M146 42h1M150 42h1M153 42h2M142 43h1M146 43h1M150 43h1M152 43h1M154 43h1M142 44h1M146 44h1M150 44h2M154 44h1M142 45h1M146 45h1M150 45h1M154 45h1M142 46h1M146 46h1M150 46h1M154 46h1M142 47h1M146 47h1M150 47h1M154 47h1M142 48h1M146 48h1M150 48h1M154 48h1M142 49h1M146 49h1M150 49h1M154 49h1M142 50h1M146 50h1M150 50h1M154 50h1M142 51h1M146 51h1M150 51h1M154 51h1M142 52h1M146 52h1M151 52h1M153 52h1M142 53h1M146 53h1M152 53h1M151 54h1M153 54h1M150 55h1M154 55h1M184 66h1M182 67h5M184 68h1M184 69h1M186 69h2M184 70h2M188 70h1M184 71h1M188 71h1M184 72h1M187 72h1M184 73h1M187 73h1M188 74h1M81 93h3M80 94h1M84 94h1M80 95h1M84 95h1M80 96h1M84 96h1M81 97h3M82 98h1M80 99h5M82 100h1M82 101h1M216 144h1M291 156h1M630 196h3M631 197h2M630 198h1M632 198h1M625 199h1M629 199h1M626 200h1M628 200h1M627 201h1M626 202h1M628 202h1M625 203h1M629 203h1M624 204h1M413 212h3M412 213h1M416 213h1M412 214h1M416 214h1M412 215h1M416 215h1M413 216h3M414 217h1M412 218h5M414 219h1M414 220h1M625 236h2M630 236h2M624 237h1M627 237h1M629 237h1M632 237h1M624 238h1M627 238h1M629 238h1M632 238h1M625 239h1M627 239h1M629 239h1M631 239h1M628 240h1M628 241h1M628 242h1M628 243h1M628 244h1M445 247h1M457 247h1M446 248h1M456 248h1M446 249h1M456 249h1M447 250h2M454 250h2M449 251h5M447 252h2M454 252h2M446 253h1M456 253h1M446 254h1M456 254h1M445 255h1M457 255h1M445 256h1M457 256h1M445 257h1M457 257h1M445 258h1M457 258h1M445 259h1M457 259h1M446 260h1M456 260h1M446 261h1M456 261h1M447 262h2M454 262h2M449 263h5M627 276h3M626 277h1M630 277h1M625 278h1M631 278h1M446 279h3M625 279h1M631 279h1M445 280h1M449 280h1M625 280h1M631 280h1M445 281h1M449 281h1M626 281h1M630 281h1M445 282h1M449 282h1M624 282h1M626 282h1M630 282h1M446 283h3M625 283h1M631 283h1M447 284h1M632 284h1M445 285h5M447 286h1M447 287h1M303 313h1M301 315h1M304 317h1M303 318h3M304 319h1M213 333h1M308 333h1M308 334h1M221 335h1M304 335h9M308 336h1M231 337h1M241 337h2M244 337h3M308 337h1M308 338h1M308 339h1M312 339h3M308 340h1M311 340h1M315 340h1M241 341h1M308 341h3M316 341h1M240 342h3M308 342h1M316 342h1M324 342h1M241 343h1M308 343h1M316 343h1M323 343h3M308 344h1M315 344h1M324 344h1M99 345h3M308 345h1M314 345h1M98 346h1M102 346h1M308 346h1M314 346h1M627 346h3M98 347h1M102 347h1M308 347h1M314 347h1M626 347h1M630 347h1M98 348h1M102 348h1M315 348h1M626 348h1M630 348h1M99 349h3M316 349h1M626 349h1M630 349h1M100 350h1M627 350h3M98 351h5M628 351h1M100 352h1M626 352h5M100 353h1M628 353h1M628 354h1M245 355h5M244 356h1M250 356h1M243 357h1M251 357h1M243 358h1M251 358h1M326 358h1M243 359h1M251 359h1M326 359h1M243 360h1M251 360h1M322 360h9M243 361h1M251 361h1M326 361h1M244 362h1M250 362h1M326 362h1M245 363h5M326 363h1M247 364h1M326 364h1M330 364h3M247 365h1M326 365h1M329 365h1M333 365h1M247 366h1M326 366h3M334 366h1M243 367h9M326 367h1M334 367h1M247 368h1M326 368h1M334 368h1M247 369h1M326 369h1M333 369h1M247 370h1M326 370h1M332 370h1M247 371h1M326 371h1M332 371h1M242 372h1M326 372h1M332 372h1M241 373h3M333 373h1M242 374h1M334 374h1M627 376h1M625 377h5M627 378h1M627 379h1M629 379h2M627 380h2M631 380h1M627 381h1M631 381h1M627 382h1M630 382h1M627 383h1M630 383h1M631 384h1M244 387h5M243 388h1M249 388h1M242 389h1M250 389h1M242 390h1M250 390h1M242 391h1M250 391h1M96 392h1M242 392h1M250 392h1M94 393h5M242 393h1M250 393h1M96 394h1M243 394h1M249 394h1M96 395h1M98 395h2M244 395h5M96 396h2M100 396h1M246 396h1M96 397h1M100 397h1M246 397h1M96 398h1M99 398h1M246 398h1M96 399h1M99 399h1M242 399h9M100 400h1M246 400h1M246 401h1M246 402h1M246 403h1M113 406h1M119 406h1M123 406h3M112 407h2M119 407h1M122 407h1M126 407h1M111 408h1M113 408h1M119 408h1M121 408h1M127 408h1M113 409h1M118 409h1M120 409h1M127 409h1M113 410h1M117 410h1M121 410h1M127 410h1M113 411h1M117 411h1M122 411h1M126 411h1M113 412h1M117 412h1M123 412h3M113 413h1M117 413h1M124 413h1M113 414h1M117 414h1M125 414h1M114 415h1M116 415h1M126 415h1M115 416h1M127 416h1M115 417h1M127 417h1M115 418h1M127 418h1M115 419h1M127 419h1M115 420h1M127 420h1M126 421h1M125 422h1"/>
<path stroke="#00ffff" d="M336 226h1M335 228h1M335 229h1M334 231h1M334 232h1M333 234h1M332 235h1M332 237h1M331 238h1M331 240h1M330 241h1M329 243h1M329 244h1M328 246h1M328 247h1M327 249h1M327 250h1M326 252h1M325 253h1M325 255h1M324 256h1M323 258h1M323 259h1M322 261h1M322 262h1M321 264h1M321 265h1M320 267h1M320 268h1M319 270h1M318 271h1M318 273h1M317 274h1M316 276h1M316 277h1M315 279h1M315 280h1M314 282h1M314 283h1M313 285h1M313 286h1M312 288h1M311 289h1M311 291h1M310 292h1M309 294h1M309 295h1M308 297h1M308 298h1M307 300h1M307 301h1M306 303h1M306 304h1M305 306h1M304 307h1M304 309h1M303 310h1M302 312h1M302 313h1"/>
</g>
<g class="t">
<text x="486" y="14" fill="#fff">Astrolog 5.41G</text>
<text x="486" y="24" fill="#c0c0c0">Inner ring:</text>
<text x="486" y="34" fill="#c0c0c0">Chart of the Moment</text>
<text x="486" y="44" fill="#fff">Tue February 3, 2026</text>
<text x="486" y="54" fill="#fff"> 1:23:00am (ST -8:00 GMT)</text>
<text x="486" y="64" fill="#c0c0c0">San Francisco, CA</text>
<text x="486" y="74" fill="#c0c0c0">122°41'00"W 37°79'00"N</text>
<text x="486" y="84" fill="#c0c0c0">Outer ring - Transit:</text>
<text x="486" y="94" fill="#ff0">Tue February 3, 2026</text>
<text x="486" y="104" fill="#ff0">11:23:19am (ST +2:00 GMT)</text>
<text x="486" y="114" fill="#c0c0c0"> 26°43'00"E 58°23'00"N</text>
<text x="486" y="124" fill="#c0c0c0">Placidus houses.</text>
<text x="486" y="134" fill="#c0c0c0">Tropical, Geocentric.</text>
<text x="486" y="144" fill="#ff0">Julian Day = 2461074.8912</text>
<text x="486" y="154" fill="#c0c0c0">Obliquity = 23°26'09"</text>
<text x="486" y="164" fill="#c0c0c0">Sidereal time: 20:04:29</text>
<text x="486" y="174" fill="#c0c0c0">DeltaT =  95.3284</text>
<text x="486" y="194"><tspan fill="#f00"> 1st house: </tspan><tspan fill="#00f">19Sco33</tspan></text>
<text x="486" y="204"><tspan fill="#ff0"> 2nd house: </tspan><tspan fill="#f00">19Sag29</tspan></text>
<text x="486" y="214"><tspan fill="#0f0"> 3rd house: </tspan><tspan fill="#ff0">23Cap46</tspan></text>
<text x="486" y="224"><tspan fill="#00f"> 4th house: </tspan><tspan fill="#0f0">29Aqu32</tspan></text>
<text x="486" y="234"><tspan fill="#f00"> 5th house: </tspan><tspan fill="#f00"> 1Ari36</tspan></text>
<text x="486" y="244"><tspan fill="#ff0"> 6th house: </tspan><tspan fill="#f00">27Ari53</tspan></text>
<text x="486" y="254"><tspan fill="#0f0"> 7th house: </tspan><tspan fill="#ff0">19Tau33</tspan></text>
<text x="486" y="264"><tspan fill="#00f"> 8th house: </tspan><tspan fill="#0f0">19Gem29</tspan></text>
<text x="486" y="274"><tspan fill="#f00"> 9th house: </tspan><tspan fill="#00f">23Can46</tspan></text>
<text x="486" y="284"><tspan fill="#ff0">10th house: </tspan><tspan fill="#f00">29Leo32</tspan></text>
<text x="486" y="294"><tspan fill="#0f0">11th house: </tspan><tspan fill="#0f0"> 1Lib36</tspan></text>
<text x="486" y="304"><tspan fill="#00f">12th house: </tspan><tspan fill="#0f0">27Lib53</tspan></text>
<text x="486" y="324"><tspan fill="#f00"> Sun: </tspan><tspan fill="#0f0">14Aqu33</tspan><tspan fill="#fff"> </tspan><tspan fill="#c0c0c0"> + 0°00'</tspan></text>
<text x="486" y="334"><tspan fill="#00f">Moon: </tspan><tspan fill="#ff0"> 3Vir26</tspan><tspan fill="#fff"> </tspan><tspan fill="#c0c0c0"> + 0°31'</tspan></text>
<text x="486" y="344"><tspan fill="#0f0">Merc: </tspan><tspan fill="#0f0">23Aqu43</tspan><tspan fill="#fff"> </tspan><tspan fill="#c0c0c0"> - 1°43'</tspan></text>
<text x="486" y="354"><tspan fill="#ff0">Venu: </tspan><tspan fill="#0f0">21Aqu11</tspan><tspan fill="#fff"> </tspan><tspan fill="#c0c0c0"> - 1°24'</tspan></text>
<text x="486" y="364"><tspan fill="#f00">Mars: </tspan><tspan fill="#0f0"> 8Aqu36</tspan><tspan fill="#fff"> </tspan><tspan fill="#c0c0c0"> - 1°03'</tspan></text>
<text x="486" y="374"><tspan fill="#f00">Jupi: </tspan><tspan fill="#00f">17Can06</tspan><tspan fill="#fff">R</tspan><tspan fill="#c0c0c0"> + 0°19'</tspan></text>
<text x="486" y="384"><tspan fill="#ff0">Satu: </tspan><tspan fill="#00f">28Pis53</tspan><tspan fill="#fff"> </tspan><tspan fill="#c0c0c0"> - 2°10'</tspan></text>
<text x="486" y="394"><tspan fill="#0f0">Uran: </tspan><tspan fill="#ff0">27Tau28</tspan><tspan fill="#fff">R</tspan><tspan fill="#c0c0c0"> - 0°11'</tspan></text>
<text x="486" y="404"><tspan fill="#00f">Nept: </tspan><tspan fill="#f00"> 0Ari12</tspan><tspan fill="#fff"> </tspan><tspan fill="#c0c0c0"> - 1°19'</tspan></text>
<text x="486" y="414"><tspan fill="#00f">Plut: </tspan><tspan fill="#0f0"> 3Aqu46</tspan><tspan fill="#fff"> </tspan><tspan fill="#c0c0c0"> - 3°49'</tspan></text>
<text x="486" y="434" fill="#c0c0c0">Fire: 1, Earth: 2,</text>
<text x="486" y="444" fill="#c0c0c0">Air : 5, Water: 2</text>
<text x="486" y="454" fill="#c0c0c0">Car: 2, Fix: 6, Mut: 2</text>
<text x="486" y="464" fill="#c0c0c0">Yang: 6, Yin: 4</text>
<text x="486" y="474" fill="#c0c0c0">M: 3, N: 7, A: 6, D: 4</text>
<text class="h" transform="translate(65.3,290) scale(0.8,1)" fill="#ff0000">1</text>
<text class="h" transform="translate(115.3,374) scale(0.8,1)" fill="#ffff00">2</text>
<text class="h" transform="translate(212.3,420) scale(0.8,1)" fill="#00ff00">3</text>
<text class="h" transform="translate(314.3,403) scale(0.8,1)" fill="#0000ff">4</text>
<text class="h" transform="translate(382.3,345) scale(0.8,1)" fill="#ff0000">5</text>
<text class="h" transform="translate(410.3,277) scale(0.8,1)" fill="#ffff00">6</text>
<text class="h" transform="translate(407.3,199) scale(0.8,1)" fill="#00ff00">7</text>
<text class="h" transform="translate(357.3,114) scale(0.8,1)" fill="#0000ff">8</text>
<text class="h" transform="translate(260.3,68) scale(0.8,1)" fill="#ff0000">9</text>
<text class="h" transform="translate(154.3,85) scale(0.8,1)" fill="#ffff00">10</text>
<text class="h" transform="translate(86.3,143) scale(0.8,1)" fill="#00ff00">11</text>
<text class="h" transform="translate(58.3,211) scale(0.8,1)" fill="#0000ff">12</text>
</g>
</svg>
</body></html>
